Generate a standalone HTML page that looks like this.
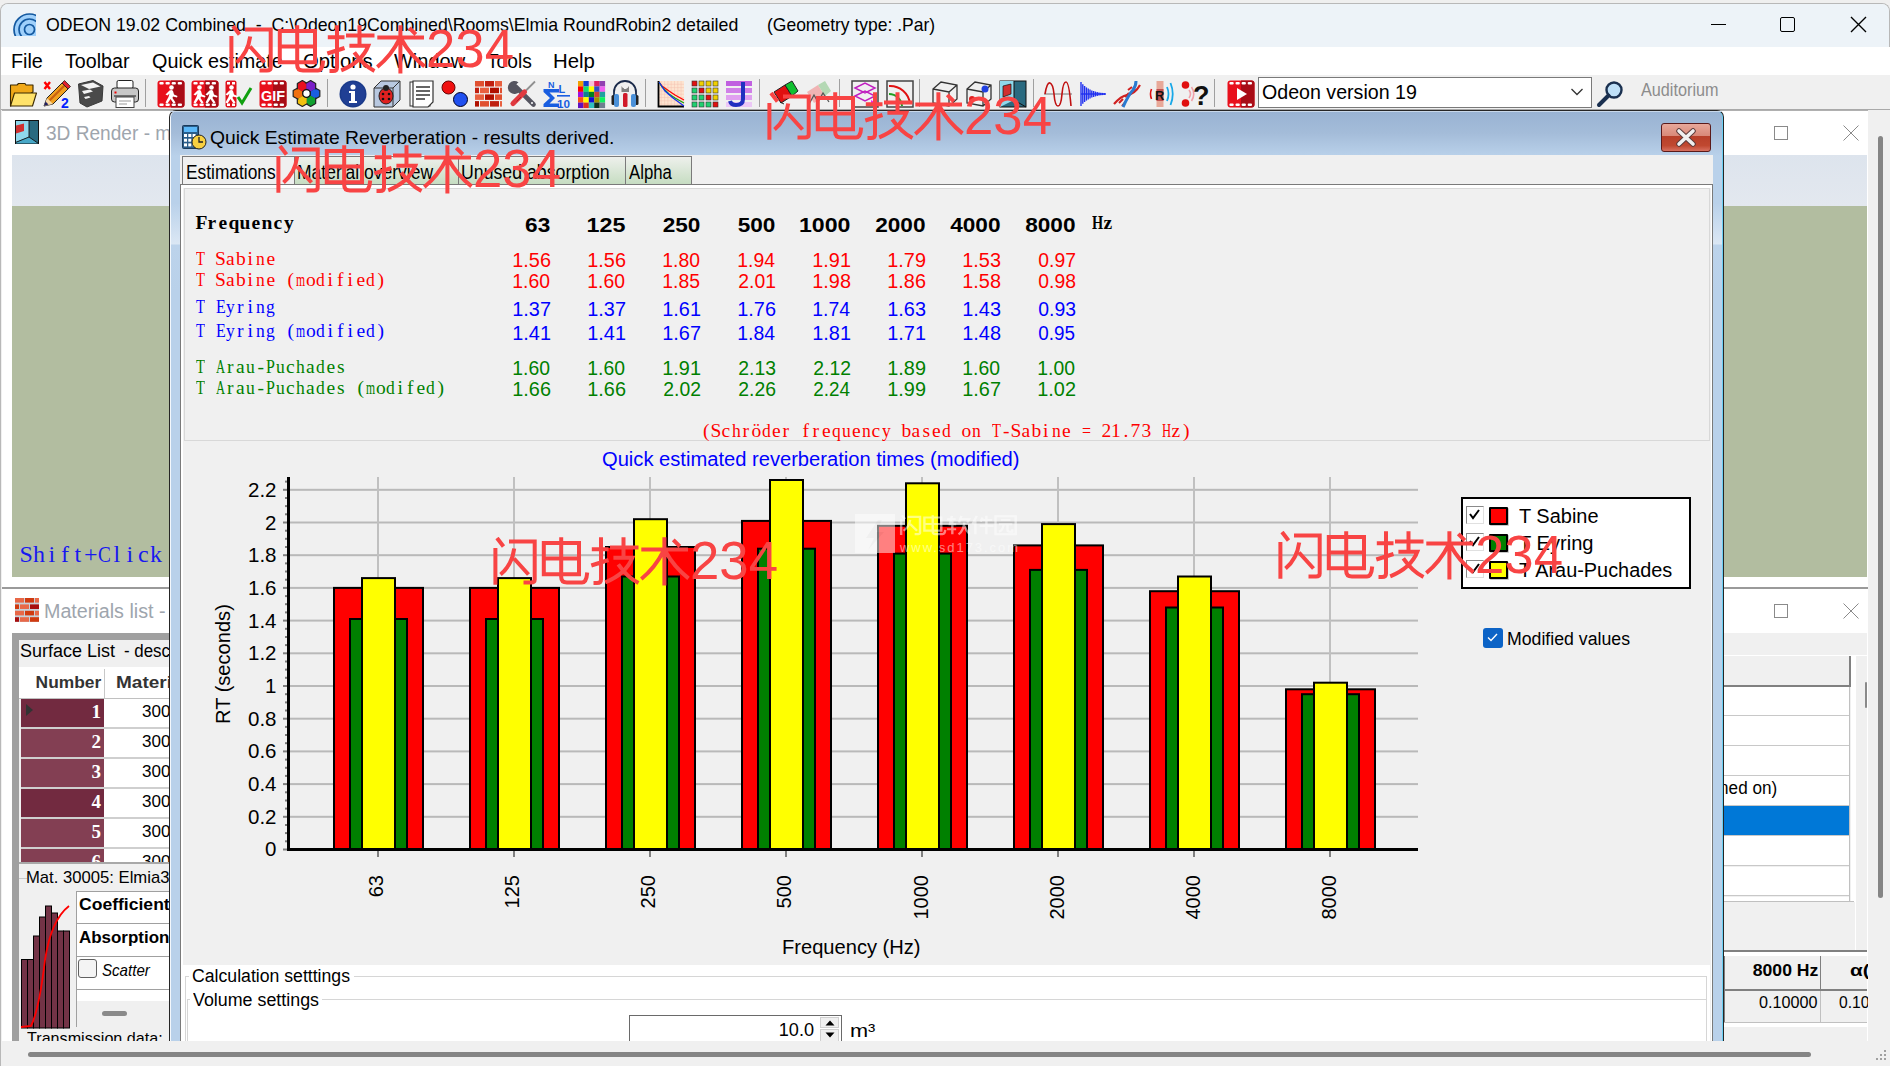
<!DOCTYPE html><html><head><meta charset="utf-8"><style>
*{margin:0;padding:0;box-sizing:border-box}
html,body{width:1890px;height:1066px;overflow:hidden;background:#f0f0f0;position:relative}
body>div,body>span,body>svg{position:absolute}
.t{position:absolute;white-space:pre;line-height:1;display:block}
</style></head><body><div style="left:0px;top:0px;width:1890px;height:3px;background:#efefef;"></div>
<div style="left:0px;top:3px;width:1890px;height:1063px;background:#f0f0f0;border-top:1px solid #b8b8b8;border-left:1px solid #b8b8b8;border-right:1px solid #b8b8b8;border-top-left-radius:8px;border-top-right-radius:8px;"></div>
<div style="left:1px;top:4px;width:1888px;height:43px;background:#edf3f8;border-top-left-radius:7px;border-top-right-radius:7px;"></div>
<svg style="left:12px;top:12px" width="26" height="26" viewBox="0 0 26 26"><clipPath id="ic"><rect x="0" y="0" width="24" height="24"/></clipPath><g clip-path="url(#ic)" fill="#9fd0fb" stroke="#1459a0" stroke-width="1.7"><circle cx="17.5" cy="17.5" r="15.5"/><circle cx="17.5" cy="17.5" r="10.5"/><circle cx="17.5" cy="17.5" r="5"/></g></svg>
<span id="t1" class="t" style="top:16.00px;font-family:'Liberation Sans', sans-serif;font-size:18.5px;color:#000;font-weight:400;left:46.00px;transform-origin:left top;transform:scaleX(0.9576);">ODEON 19.02 Combined  -  C:\Odeon19Combined\Rooms\Elmia RoundRobin2 detailed</span>
<span id="t2" class="t" style="top:16.00px;font-family:'Liberation Sans', sans-serif;font-size:18.5px;color:#000;font-weight:400;left:767.05px;transform-origin:left top;transform:scaleX(0.9451);">(Geometry type: .Par)</span>
<div style="left:1711px;top:24px;width:15px;height:1px;background:#000;"></div>
<div style="left:1780px;top:17px;width:15px;height:15px;background:transparent;border:1.4px solid #000;border-radius:2px;"></div>
<svg style="left:1850px;top:16px" width="17" height="17" viewBox="0 0 17 17"><path d="M1 1L16 16M16 1L1 16" stroke="#000" stroke-width="1.4"/></svg>
<div style="left:1px;top:47px;width:1889px;height:28px;background:#ffffff;"></div>
<span id="t3" class="t" style="top:52.00px;font-family:'Liberation Sans', sans-serif;font-size:19.5px;color:#000;font-weight:400;left:10.99px;transform-origin:left top;transform:scaleX(1.0143);">File</span>
<span id="t4" class="t" style="top:52.00px;font-family:'Liberation Sans', sans-serif;font-size:19.5px;color:#000;font-weight:400;left:65.00px;transform-origin:left top;transform:scaleX(1.0083);">Toolbar</span>
<span id="t5" class="t" style="top:52.00px;font-family:'Liberation Sans', sans-serif;font-size:19.5px;color:#000;font-weight:400;left:152.00px;transform-origin:left top;transform:scaleX(1.0147);">Quick estimate</span>
<span id="t6" class="t" style="top:52.00px;font-family:'Liberation Sans', sans-serif;font-size:19.5px;color:#000;font-weight:400;left:303.00px;transform-origin:left top;transform:scaleX(1.0378);">Options</span>
<span id="t7" class="t" style="top:52.00px;font-family:'Liberation Sans', sans-serif;font-size:19.5px;color:#000;font-weight:400;left:394.00px;transform-origin:left top;transform:scaleX(1.0246);">Window</span>
<span id="t8" class="t" style="top:52.00px;font-family:'Liberation Sans', sans-serif;font-size:19.5px;color:#000;font-weight:400;left:487.00px;transform-origin:left top;transform:scaleX(0.9831);">Tools</span>
<span id="t9" class="t" style="top:52.00px;font-family:'Liberation Sans', sans-serif;font-size:19.5px;color:#000;font-weight:400;left:552.96px;transform-origin:left top;transform:scaleX(1.0443);">Help</span>
<div style="left:1px;top:75px;width:1889px;height:35px;background:#f0f0f0;"></div>
<div style="left:1px;top:109px;width:1889px;height:1px;background:#a9a9a9;"></div>
<svg style="left:0;top:72px" width="1890" height="40" viewBox="0 0 1890 40"><g transform="translate(9,8)"><path d="M1.5 5 L8 5 L9.5 3.5 L16 3.5 L17 5 L24 5 L24 12 L1.5 26 Z" fill="#f0a818" stroke="#3a2800" stroke-width="1.1" stroke-linejoin="round"/><path d="M1.5 26 L5.5 13 L27.5 13 L23.5 26 Z" fill="#ffe26a" stroke="#3a2800" stroke-width="1.1" stroke-linejoin="round"/></g><g transform="translate(43,8)"><path d="M1.5 2 L7 9 M7 2 L1.5 9" stroke="#ff0000" stroke-width="2.4"/><path d="M1 26 L4 18 L19 3 L25 9 L10 24 Z" fill="#f0a020" stroke="#222" stroke-width="1"/><path d="M6.5 20.5 L21.5 5.5" stroke="#c86010" stroke-width="2.2"/><path d="M19 3 L21.5 0.5 L27.5 6.5 L25 9 Z" fill="#e02030" stroke="#222" stroke-width="0.8"/><path d="M1 26 L4 18 L10 24 Z" fill="#f8d8a0"/><path d="M1 26 L2.5 21.5 L5.5 24.5 Z" fill="#202060"/><text x="18" y="28" font-family="Liberation Sans" font-weight="bold" font-size="14" fill="#0020ff">2</text></g><g transform="translate(78,8)"><path d="M0.5 4 L15 0.5 L25 6 L24 21 L9 27 L2 23 Z" fill="#4a4a4a" stroke="#3a3a3a" stroke-linejoin="round"/><path d="M3 5 L15 2.5 L22.5 6.5 L11 9 Z" fill="#f4f4f4"/><path d="M4 11 L12 9.5 L15 11.5 L6 14 Z" fill="#f4f4f4"/><path d="M6 17 L11 16 L12.5 17.5 L7.5 19 Z" fill="#f4f4f4"/></g><g transform="translate(111,8)"><rect x="6" y="0.5" width="16" height="8" rx="1.5" fill="#fff" stroke="#222"/><rect x="0.5" y="8" width="27" height="14" rx="3" fill="#c8c8c8" stroke="#222"/><rect x="3" y="15" width="22" height="2" fill="#707070"/><rect x="5" y="17" width="18" height="10.5" fill="#fff" stroke="#444"/><rect x="3.5" y="11.5" width="2" height="2" fill="#f00000"/><path d="M8 21 H20 M8 24 H16" stroke="#999"/></g><rect x="145" y="7" width="1" height="28" fill="#a0a0a0"/><rect x="327" y="7" width="1" height="28" fill="#a0a0a0"/><rect x="645" y="7" width="1" height="28" fill="#a0a0a0"/><rect x="759" y="7" width="1" height="28" fill="#a0a0a0"/><rect x="839" y="7" width="1" height="28" fill="#a0a0a0"/><rect x="919" y="7" width="1" height="28" fill="#a0a0a0"/><rect x="1033" y="7" width="1" height="28" fill="#a0a0a0"/><rect x="1214" y="7" width="1" height="28" fill="#a0a0a0"/><g transform="translate(157,8)"><rect x="0.5" y="0.5" width="27" height="27" rx="3" fill="#e8101c"/><path d="M14.0 0.5 H24.5 Q27.5 0.5 27.5 3.5 V24.5 Q27.5 27.5 24.5 27.5 H14.0 Z" fill="#a80c16"/><rect x="2.4" y="2" width="4.3" height="2.6" rx="1" fill="#fff"/><rect x="2.4" y="23.4" width="4.3" height="2.6" rx="1" fill="#fff"/><rect x="8.5" y="2" width="4.3" height="2.6" rx="1" fill="#fff"/><rect x="8.5" y="23.4" width="4.3" height="2.6" rx="1" fill="#fff"/><rect x="14.6" y="2" width="4.3" height="2.6" rx="1" fill="#fff"/><rect x="14.6" y="23.4" width="4.3" height="2.6" rx="1" fill="#fff"/><rect x="20.7" y="2" width="4.3" height="2.6" rx="1" fill="#fff"/><rect x="20.7" y="23.4" width="4.3" height="2.6" rx="1" fill="#fff"/><g transform="translate(14,0)" fill="#fff"><circle cx="0.5" cy="7.5" r="2.3"/><path d="M-1.5 10.5 Q1 9.5 2 11 L3 14.5 L6.5 16 L6 17.5 L2 16.5 L1.5 18 L4.5 22.5 L2.5 23.5 L-0.5 19 L-3.5 23.5 L-5.5 22.5 L-2.5 17 L-1.5 13.5 L-3.5 15.5 L-5.5 14.5 Z"/></g></g><g transform="translate(191,8)"><rect x="0.5" y="0.5" width="27" height="27" rx="3" fill="#e8101c"/><path d="M14.0 0.5 H24.5 Q27.5 0.5 27.5 3.5 V24.5 Q27.5 27.5 24.5 27.5 H14.0 Z" fill="#a80c16"/><rect x="2.4" y="2" width="4.3" height="2.6" rx="1" fill="#fff"/><rect x="2.4" y="23.4" width="4.3" height="2.6" rx="1" fill="#fff"/><rect x="8.5" y="2" width="4.3" height="2.6" rx="1" fill="#fff"/><rect x="8.5" y="23.4" width="4.3" height="2.6" rx="1" fill="#fff"/><rect x="14.6" y="2" width="4.3" height="2.6" rx="1" fill="#fff"/><rect x="14.6" y="23.4" width="4.3" height="2.6" rx="1" fill="#fff"/><rect x="20.7" y="2" width="4.3" height="2.6" rx="1" fill="#fff"/><rect x="20.7" y="23.4" width="4.3" height="2.6" rx="1" fill="#fff"/><g transform="translate(8,0)" fill="#fff"><circle cx="0.5" cy="7.5" r="2.3"/><path d="M-1.5 10.5 Q1 9.5 2 11 L3 14.5 L6.5 16 L6 17.5 L2 16.5 L1.5 18 L4.5 22.5 L2.5 23.5 L-0.5 19 L-3.5 23.5 L-5.5 22.5 L-2.5 17 L-1.5 13.5 L-3.5 15.5 L-5.5 14.5 Z"/></g><g transform="translate(20,0)" fill="#fff"><circle cx="0.5" cy="7.5" r="2.3"/><path d="M-1.5 10.5 Q1 9.5 2 11 L3 14.5 L6.5 16 L6 17.5 L2 16.5 L1.5 18 L4.5 22.5 L2.5 23.5 L-0.5 19 L-3.5 23.5 L-5.5 22.5 L-2.5 17 L-1.5 13.5 L-3.5 15.5 L-5.5 14.5 Z"/></g></g><g transform="translate(225,8)"><rect x="0.5" y="0.5" width="11" height="27" rx="2" fill="#e0101a"/><rect x="2" y="2" width="3" height="2.5" fill="#fff"/><rect x="7" y="2" width="3" height="2.5" fill="#fff"/><rect x="2" y="23.5" width="3" height="2.5" fill="#fff"/><rect x="7" y="23.5" width="3" height="2.5" fill="#fff"/><g transform="translate(6,0)" fill="#fff"><circle cx="0.5" cy="7.5" r="2.3"/><path d="M-1.5 10.5 Q1 9.5 2 11 L3 14.5 L6.5 16 L6 17.5 L2 16.5 L1.5 18 L4.5 22.5 L2.5 23.5 L-0.5 19 L-3.5 23.5 L-5.5 22.5 L-2.5 17 L-1.5 13.5 L-3.5 15.5 L-5.5 14.5 Z"/></g><path d="M13 17 L17 23 L26 8" fill="none" stroke="#10a010" stroke-width="3"/></g><g transform="translate(259,8)"><rect x="0.5" y="0.5" width="27" height="27" rx="3" fill="#e8101c"/><path d="M14.0 0.5 H24.5 Q27.5 0.5 27.5 3.5 V24.5 Q27.5 27.5 24.5 27.5 H14.0 Z" fill="#a80c16"/><rect x="2.4" y="2" width="4.3" height="2.6" rx="1" fill="#fff"/><rect x="2.4" y="23.4" width="4.3" height="2.6" rx="1" fill="#fff"/><rect x="8.5" y="2" width="4.3" height="2.6" rx="1" fill="#fff"/><rect x="8.5" y="23.4" width="4.3" height="2.6" rx="1" fill="#fff"/><rect x="14.6" y="2" width="4.3" height="2.6" rx="1" fill="#fff"/><rect x="14.6" y="23.4" width="4.3" height="2.6" rx="1" fill="#fff"/><rect x="20.7" y="2" width="4.3" height="2.6" rx="1" fill="#fff"/><rect x="20.7" y="23.4" width="4.3" height="2.6" rx="1" fill="#fff"/><text x="14" y="20.5" text-anchor="middle" font-family="Liberation Sans" font-weight="bold" font-size="15" fill="#fff" textLength="24" lengthAdjust="spacingAndGlyphs">GIF</text></g><g transform="translate(306.5,21.5)"><polygon points="13.32,2.90 8.30,5.80 3.28,2.90 3.28,-2.90 8.30,-5.80 13.32,-2.90" fill="#1a5ee0" stroke="#222" stroke-width="1.2" stroke-linejoin="round"/><polygon points="9.17,10.09 4.15,12.99 -0.87,10.09 -0.87,4.29 4.15,1.39 9.17,4.29" fill="#10a030" stroke="#222" stroke-width="1.2" stroke-linejoin="round"/><polygon points="0.87,10.09 -4.15,12.99 -9.17,10.09 -9.17,4.29 -4.15,1.39 0.87,4.29" fill="#f0c010" stroke="#222" stroke-width="1.2" stroke-linejoin="round"/><polygon points="-3.28,2.90 -8.30,5.80 -13.32,2.90 -13.32,-2.90 -8.30,-5.80 -3.28,-2.90" fill="#f07010" stroke="#222" stroke-width="1.2" stroke-linejoin="round"/><polygon points="0.87,-4.29 -4.15,-1.39 -9.17,-4.29 -9.17,-10.09 -4.15,-12.99 0.87,-10.09" fill="#e81020" stroke="#222" stroke-width="1.2" stroke-linejoin="round"/><polygon points="9.17,-4.29 4.15,-1.39 -0.87,-4.29 -0.87,-10.09 4.15,-12.99 9.17,-10.09" fill="#7a20c8" stroke="#222" stroke-width="1.2" stroke-linejoin="round"/><polygon points="12.28,2.30 8.30,4.60 4.32,2.30 4.32,-2.30 8.30,-4.60 12.28,-2.30" fill="#1a5ee0"/><polygon points="8.13,9.49 4.15,11.79 0.17,9.49 0.17,4.89 4.15,2.59 8.13,4.89" fill="#10a030"/><polygon points="-0.17,9.49 -4.15,11.79 -8.13,9.49 -8.13,4.89 -4.15,2.59 -0.17,4.89" fill="#f0c010"/><polygon points="-4.32,2.30 -8.30,4.60 -12.28,2.30 -12.28,-2.30 -8.30,-4.60 -4.32,-2.30" fill="#f07010"/><polygon points="-0.17,-4.89 -4.15,-2.59 -8.13,-4.89 -8.13,-9.49 -4.15,-11.79 -0.17,-9.49" fill="#e81020"/><polygon points="8.13,-4.89 4.15,-2.59 0.17,-4.89 0.17,-9.49 4.15,-11.79 8.13,-9.49" fill="#7a20c8"/><circle cx="0" cy="0" r="3.8" fill="#fff" stroke="#111" stroke-width="1.3"/></g><g transform="translate(339,8)"><circle cx="14" cy="14" r="13.5" fill="#1a3a8a"/><circle cx="14" cy="14" r="12" fill="#203f94"/><circle cx="14" cy="7" r="2.6" fill="#fff"/><path d="M10 11 H16 V21 H18 V23 H10 V21 H12 V13 H10 Z" fill="#fff"/></g><g transform="translate(373,8)"><path d="M1 8 L8 1 L27 1 L27 20 L20 27 L1 27 Z" fill="#b8c8e0" stroke="#333"/><path d="M1 8 H20 V27 M20 8 L27 1" fill="none" stroke="#333"/><ellipse cx="13" cy="16" rx="7" ry="8" fill="#e02020" stroke="#222"/><circle cx="13" cy="8" r="3" fill="#222"/><circle cx="10" cy="14" r="1.3" fill="#111"/><circle cx="16" cy="14" r="1.3" fill="#111"/><circle cx="10" cy="19" r="1.3" fill="#111"/><circle cx="16" cy="19" r="1.3" fill="#111"/></g><g transform="translate(409,8)"><rect x="1" y="2" width="20" height="24" fill="#fff" stroke="#333"/><path d="M4 1 H24 V22 L19 27 H4 Z" fill="#fff" stroke="#333" stroke-width="1.2"/><path d="M7 7 H21 M7 11 H21 M7 15 H21 M7 19 H16" stroke="#333" stroke-width="1.5"/></g><g transform="translate(441,8)"><circle cx="7.5" cy="7.5" r="6.5" fill="#f01010" stroke="#600"/><circle cx="19.5" cy="19.5" r="7" fill="#2050f0" stroke="#002"/></g><g transform="translate(475,8)"><rect x="0" y="1.0" width="9" height="5.5" fill="#e05030"/><rect x="10" y="1.0" width="9" height="5.5" fill="#c02010"/><rect x="20" y="1.0" width="7" height="5.5" fill="#e86040"/><rect x="0" y="7.7" width="4" height="5.5" fill="#c02010"/><rect x="5" y="7.7" width="9" height="5.5" fill="#e86040"/><rect x="15" y="7.7" width="9" height="5.5" fill="#b01000"/><rect x="25" y="7.7" width="2" height="5.5" fill="#e05030"/><rect x="0" y="14.4" width="9" height="5.5" fill="#e86040"/><rect x="10" y="14.4" width="9" height="5.5" fill="#b01000"/><rect x="20" y="14.4" width="7" height="5.5" fill="#e05030"/><rect x="0" y="21.1" width="4" height="5.5" fill="#b01000"/><rect x="5" y="21.1" width="9" height="5.5" fill="#e05030"/><rect x="15" y="21.1" width="9" height="5.5" fill="#c02010"/><rect x="25" y="21.1" width="2" height="5.5" fill="#e86040"/></g><g transform="translate(509,8)"><path d="M7 7 L24.5 24.5" stroke="#555560" stroke-width="4.6" stroke-linecap="round"/><path d="M9.5 2.5 A6.5 6.5 0 1 0 10.5 11.5 L6 8 L8 3.5 Z" fill="#555560"/><circle cx="23" cy="23" r="1" fill="#fff"/><path d="M26 1.5 L14.5 13" stroke="#909090" stroke-width="1.8"/><path d="M15.5 12 L4 23.5" stroke="#e03a40" stroke-width="5.2" stroke-linecap="round"/><path d="M12 17 L7.5 21.5" stroke="#b02028" stroke-width="1"/></g><g transform="translate(543,8)" fill="#1a5ee0" font-family="Liberation Sans" font-weight="bold"><path d="M0.5 9 H16 V12.5 H6.5 L12 18 L6.5 23.5 H16 V27 H0.5 V24 L7 18 L0.5 12 Z"/><text x="5" y="8" font-size="9">N</text><text x="15.5" y="13" font-size="11">L</text><rect x="14" y="15" width="13" height="1.6"/><text x="14" y="27.5" font-size="11" textLength="13" lengthAdjust="spacingAndGlyphs">10</text></g><g transform="translate(577,8)"><rect x="1.0" y="1.0" width="5.5" height="5.5" fill="#f0a000"/><rect x="6.4" y="1.0" width="5.5" height="5.5" fill="#1040d0"/><rect x="11.8" y="1.0" width="5.5" height="5.5" fill="#f8c0d8"/><rect x="17.2" y="1.0" width="5.5" height="5.5" fill="#e02060"/><rect x="22.6" y="1.0" width="5.5" height="5.5" fill="#9040b0"/><rect x="1.0" y="6.4" width="5.5" height="5.5" fill="#ff0000"/><rect x="6.4" y="6.4" width="5.5" height="5.5" fill="#10e070"/><rect x="11.8" y="6.4" width="5.5" height="5.5" fill="#ffff00"/><rect x="17.2" y="6.4" width="5.5" height="5.5" fill="#3050c0"/><rect x="22.6" y="6.4" width="5.5" height="5.5" fill="#f060f0"/><rect x="1.0" y="11.8" width="5.5" height="5.5" fill="#a010e0"/><rect x="6.4" y="11.8" width="5.5" height="5.5" fill="#108090"/><rect x="11.8" y="11.8" width="5.5" height="5.5" fill="#008020"/><rect x="17.2" y="11.8" width="5.5" height="5.5" fill="#d04030"/><rect x="22.6" y="11.8" width="5.5" height="5.5" fill="#20a0a0"/><rect x="1.0" y="17.2" width="5.5" height="5.5" fill="#ff5010"/><rect x="6.4" y="17.2" width="5.5" height="5.5" fill="#ffff00"/><rect x="11.8" y="17.2" width="5.5" height="5.5" fill="#1010d0"/><rect x="17.2" y="17.2" width="5.5" height="5.5" fill="#a09000"/><rect x="22.6" y="17.2" width="5.5" height="5.5" fill="#10f060"/><rect x="1.0" y="22.6" width="5.5" height="5.5" fill="#6010c0"/><rect x="6.4" y="22.6" width="5.5" height="5.5" fill="#e03020"/><rect x="11.8" y="22.6" width="5.5" height="5.5" fill="#30c0c0"/><rect x="17.2" y="22.6" width="5.5" height="5.5" fill="#103020"/><rect x="22.6" y="22.6" width="5.5" height="5.5" fill="#708090"/></g><g transform="translate(611,8)"><path d="M3 16 V12 A11 11 0 0 1 25 12 V16" fill="none" stroke="#1a2a4a" stroke-width="1.8"/><rect x="0.5" y="15" width="3.5" height="10" rx="1.5" fill="#222"/><rect x="24" y="15" width="3.5" height="10" rx="1.5" fill="#222"/><rect x="3" y="14" width="5" height="13" rx="2" fill="#4a90d8"/><rect x="20" y="14" width="5" height="13" rx="2" fill="#4a90d8"/><rect x="12" y="13" width="4.5" height="14" rx="1.5" fill="#d01828"/><path d="M10.5 6 A4 4 0 0 0 18 6 V12 H10.5 Z" fill="#808080"/><rect x="13" y="4" width="2.5" height="5" fill="#f0f0f0"/></g><g transform="translate(657,8)"><rect x="1" y="1" width="26" height="26" fill="#fde4d0"/><path d="M4.3 1 V27 M1 4.3 H27" stroke="#f4c0b0" stroke-width="0.5"/><path d="M7.6 1 V27 M1 7.6 H27" stroke="#f4c0b0" stroke-width="0.5"/><path d="M10.9 1 V27 M1 10.9 H27" stroke="#f4c0b0" stroke-width="0.5"/><path d="M14.2 1 V27 M1 14.2 H27" stroke="#f4c0b0" stroke-width="0.5"/><path d="M17.5 1 V27 M1 17.5 H27" stroke="#f4c0b0" stroke-width="0.5"/><path d="M20.8 1 V27 M1 20.8 H27" stroke="#f4c0b0" stroke-width="0.5"/><path d="M24.1 1 V27 M1 24.1 H27" stroke="#f4c0b0" stroke-width="0.5"/><path d="M1.5 1 V26.5 H27" fill="none" stroke="#000" stroke-width="1.8"/><path d="M2 2 L5 6 L12 11 L18 15 L27 20" fill="none" stroke="#ff0000" stroke-width="1.2"/><path d="M2 2 L5 7 L12 14 L18 18 L27 23" fill="none" stroke="#10a010" stroke-width="1.2"/><path d="M2 2 L8 11 L16 18 L27 26" fill="none" stroke="#1030f0" stroke-width="1.2"/></g><g transform="translate(691,8)"><rect x="1" y="1" width="5" height="5" fill="#e01010" stroke="#333" stroke-width="0.6"/><rect x="8" y="1" width="5" height="5" fill="#f0d000" stroke="#333" stroke-width="0.6"/><rect x="15" y="1" width="5" height="5" fill="#f0d000" stroke="#333" stroke-width="0.6"/><rect x="22" y="1" width="5" height="5" fill="#f0d000" stroke="#333" stroke-width="0.6"/><rect x="1" y="8" width="5" height="5" fill="#20d070" stroke="#333" stroke-width="0.6"/><rect x="8" y="8" width="5" height="5" fill="#e01010" stroke="#333" stroke-width="0.6"/><rect x="15" y="8" width="5" height="5" fill="#f0d000" stroke="#333" stroke-width="0.6"/><rect x="22" y="8" width="5" height="5" fill="#f0d000" stroke="#333" stroke-width="0.6"/><rect x="1" y="15" width="5" height="5" fill="#20d070" stroke="#333" stroke-width="0.6"/><rect x="8" y="15" width="5" height="5" fill="#20d070" stroke="#333" stroke-width="0.6"/><rect x="15" y="15" width="5" height="5" fill="#e01010" stroke="#333" stroke-width="0.6"/><rect x="22" y="15" width="5" height="5" fill="#f0d000" stroke="#333" stroke-width="0.6"/><rect x="1" y="22" width="5" height="5" fill="#20d070" stroke="#333" stroke-width="0.6"/><rect x="8" y="22" width="5" height="5" fill="#20d070" stroke="#333" stroke-width="0.6"/><rect x="15" y="22" width="5" height="5" fill="#20d070" stroke="#333" stroke-width="0.6"/><rect x="22" y="22" width="5" height="5" fill="#e01010" stroke="#333" stroke-width="0.6"/></g><g transform="translate(725,8)"><rect x="1" y="1" width="26" height="5" fill="#c060e0"/><rect x="1" y="8" width="26" height="5" fill="#d080e8"/><rect x="1" y="15" width="26" height="5" fill="#e0a0f0"/><rect x="1" y="22" width="26" height="5" fill="#ecc8f6"/><path d="M18 2 V19 Q18 25 11 25 Q6 25 5 21" fill="none" stroke="#2030c0" stroke-width="4"/></g><g transform="translate(772,8)"><path d="M2 12 L13 5 L20 16 L9 23 Z" fill="#e01010" stroke="#222"/><path d="M13 5 L20 1 L26 11 L20 16 Z" fill="#10c030" stroke="#222"/><path d="M8 22 L12 24" stroke="#222"/></g><g transform="translate(805,8)" opacity="0.75"><path d="M2 12 L13 5 L20 16 L9 23 Z" fill="#f0a0a0"/><path d="M13 5 L20 1 L26 11 L20 16 Z" fill="#a0d0a0"/><path d="M3 26 L9 15 L13 22 L18 13 L24 22" fill="none" stroke="#222" stroke-width="1.3"/></g><g transform="translate(851,8)"><rect x="1" y="1" width="26" height="26" fill="#f0f0f0" stroke="#444" stroke-width="1.5"/><path d="M4 8 L14 3 L24 8 L14 13 Z M4 16 L14 11 L24 16 L14 21 Z" fill="none" stroke="#c020c0" stroke-width="1.5"/><path d="M20 20 L25 23 L20 25" fill="#f020f0"/></g><g transform="translate(886,8)"><rect x="1" y="1" width="26" height="26" fill="#f0f0f0" stroke="#444" stroke-width="1.5"/><path d="M3 6 A20 20 0 0 1 24 24" fill="none" stroke="#e01010" stroke-width="2"/><path d="M3 14 A13 13 0 0 1 16 26" fill="none" stroke="#20a020" stroke-width="2"/></g><g transform="translate(931,8)" fill="none" stroke="#333" stroke-width="1.3"><path d="M2 9 L10 2 L26 5 L26 19 L18 26 L2 23 Z M2 9 L18 12 L26 5 M18 12 V26"/></g><g transform="translate(965,8)" fill="none" stroke="#333" stroke-width="1.3"><path d="M2 9 L10 2 L26 5 L26 19 L18 26 L2 23 Z M2 9 L18 12 L26 5 M18 12 V26"/><circle cx="20" cy="9" r="3.5" fill="#2040e0" stroke="none"/><circle cx="7" cy="19" r="3" fill="#e02020" stroke="none"/></g><g transform="translate(999,8)"><rect x="1" y="1" width="26" height="26" fill="#2a6a80" stroke="#111"/><path d="M1 1 H15 V20 L1 27 Z" fill="#8fd8ec"/><path d="M4 6 L12 4 L12 14 L4 17 Z" fill="#d03030" stroke="#111" stroke-width="0.7"/><path d="M15 1 V20 L27 27" fill="none" stroke="#111"/></g><g transform="translate(1044,8)"><path d="M0 14 H28" stroke="#555" stroke-width="0.8"/><path d="M1 14 Q3 2 6 3 Q9 4 10 14 Q11 26 14 26 Q17 26 18 14 Q19 2 22 2 Q25 2 27 26" fill="none" stroke="#c01010" stroke-width="1.6"/></g><g transform="translate(1079,8)" stroke="#2030f0" stroke-width="1.4"><path d="M2.0 2.0 V26.0"/><path d="M3.8 4.2 V23.8"/><path d="M5.6 6.0 V22.0"/><path d="M7.4 7.4 V20.6"/><path d="M9.2 8.6 V19.4"/><path d="M11.0 9.6 V18.4"/><path d="M12.8 10.4 V17.6"/><path d="M14.6 11.0 V17.0"/><path d="M16.4 11.6 V16.4"/><path d="M18.2 12.0 V16.0"/><path d="M20.0 12.4 V15.6"/><path d="M21.8 12.7 V15.3"/><path d="M23.6 12.9 V15.1"/><path d="M25.4 13.1 V14.9"/><path d="M2 14 H27"/></g><g transform="translate(1113,8)"><path d="M6 23 L10 19 M9 26 L13 21 M12 17 L16 13 M15 10 L19 7 M19 13 L22 9" stroke="#d02020" stroke-width="2"/><path d="M1 24 Q8 16 14 15 Q22 14 27 5" fill="none" stroke="#d02020" stroke-width="2.2"/><path d="M10 27 Q16 14 20 10 Q23 6 23 1" fill="none" stroke="#2a7ad0" stroke-width="3"/></g><g transform="translate(1146,8)"><rect x="10.5" y="1" width="7" height="26" fill="#e8a898"/><rect x="10.5" y="9" width="7" height="12" fill="#c05050"/><text x="9" y="20" font-family="Liberation Sans" font-weight="bold" font-size="13" fill="#111">R</text><path d="M5.5 9 Q3.5 14 5.5 19" fill="none" stroke="#e01010" stroke-width="1.6"/><path d="M21 7 Q24 14 21 21 M24.5 3 Q29 14 24.5 25" fill="none" stroke="#18a8e8" stroke-width="1.8"/></g><g transform="translate(1181,8)"><circle cx="4.5" cy="5" r="3.8" fill="#e01010"/><circle cx="4.5" cy="23" r="3.8" fill="#e01010"/><path d="M8 10 Q11 14 8 18 M10.5 7 Q15 14 10.5 21" fill="none" stroke="#f0a0a8" stroke-width="1.6"/><text x="12" y="25" font-family="Liberation Sans" font-weight="bold" font-size="27" fill="#111">?</text></g><g transform="translate(1227,8)"><rect x="0.5" y="0.5" width="27" height="27" rx="3" fill="#e8101c"/><path d="M14.0 0.5 H24.5 Q27.5 0.5 27.5 3.5 V24.5 Q27.5 27.5 24.5 27.5 H14.0 Z" fill="#a80c16"/><rect x="2.4" y="2" width="4.3" height="2.6" rx="1" fill="#fff"/><rect x="2.4" y="23.4" width="4.3" height="2.6" rx="1" fill="#fff"/><rect x="8.5" y="2" width="4.3" height="2.6" rx="1" fill="#fff"/><rect x="8.5" y="23.4" width="4.3" height="2.6" rx="1" fill="#fff"/><rect x="14.6" y="2" width="4.3" height="2.6" rx="1" fill="#fff"/><rect x="14.6" y="23.4" width="4.3" height="2.6" rx="1" fill="#fff"/><rect x="20.7" y="2" width="4.3" height="2.6" rx="1" fill="#fff"/><rect x="20.7" y="23.4" width="4.3" height="2.6" rx="1" fill="#fff"/><path d="M10 8 L20 14 L10 20 Z" fill="#fff"/></g><g transform="translate(1596,8)"><circle cx="18" cy="10" r="7.5" fill="#bfe0f8" stroke="#1a3050" stroke-width="2.4"/><path d="M12.5 15.5 L3 25" stroke="#1a3050" stroke-width="4" stroke-linecap="round"/></g></svg>
<div style="left:1258px;top:77px;width:334px;height:31px;background:#fff;border:1px solid #7a7a7a;"></div>
<span id="t10" class="t" style="top:83.00px;font-family:'Liberation Sans', sans-serif;font-size:19.5px;color:#000;font-weight:400;left:1262.00px;transform-origin:left top;transform:scaleX(1.0060);">Odeon version 19</span>
<svg style="left:1570px;top:87px" width="14" height="10" viewBox="0 0 14 10"><path d="M1.5 2 L7 7.5 L12.5 2" fill="none" stroke="#333" stroke-width="1.3"/></svg>
<span id="t11" class="t" style="top:82.00px;font-family:'Liberation Sans', sans-serif;font-size:17.5px;color:#8c8c8c;font-weight:400;left:1640.50px;transform-origin:left top;transform:scaleX(0.9269);">Auditorium</span>
<div style="left:1px;top:110px;width:1889px;height:956px;background:#f0f0f0;"></div>
<div style="left:2px;top:110px;width:1866px;height:478px;background:#ffffff;border-top:1px solid #b0b0b0;"></div>
<svg style="left:15px;top:120px" width="25" height="25" viewBox="0 0 25 25"><rect x="0.5" y="0.5" width="23" height="23" fill="#2a6a80" stroke="#111"/><path d="M1 1 H14 V17 L1 22 Z" fill="#8fd8ec"/><path d="M1 22 L14 17 L23.5 23.5 H1 Z" fill="#48a8c8"/><path d="M1 5.5 L9 3.5 L9 11 L1 13.5 Z" fill="#d03030"/><path d="M14 0.5 V17 L23.5 23.5 M0.5 22.5 L14 17" fill="none" stroke="#111" stroke-width="0.9"/></svg>
<span id="t12" class="t" style="top:124.00px;font-family:'Liberation Sans', sans-serif;font-size:19.5px;color:#9ea5ad;font-weight:400;left:45.50px;transform-origin:left top;transform:scaleX(0.9792);">3D Render - m</span>
<div style="left:1774px;top:126px;width:14px;height:14px;background:transparent;border:1px solid #8a8a8a;"></div>
<svg style="left:1843px;top:125px" width="16" height="16" viewBox="0 0 16 16"><path d="M0.5 0.5L15.5 15.5M15.5 0.5L0.5 15.5" stroke="#8a8a8a" stroke-width="1"/></svg>
<div style="left:12px;top:155px;width:1855px;height:51px;background:#e0e6ee;background:linear-gradient(#dde4ed,#e3e8ef);"></div>
<div style="left:12px;top:206px;width:1855px;height:371px;background:#b2bda0;"></div>
<span class="t" style="left:19.50px;top:542px;font-family:'Liberation Serif', serif;font-size:24px;color:#1818f0;font-weight:400;transform-origin:left top;">S</span><span class="t" style="left:33.00px;top:542px;font-family:'Liberation Serif', serif;font-size:24px;color:#1818f0;font-weight:400;transform-origin:left top;">h</span><span class="t" style="left:48.50px;top:542px;font-family:'Liberation Serif', serif;font-size:24px;color:#1818f0;font-weight:400;transform-origin:left top;">i</span><span class="t" style="left:61.00px;top:542px;font-family:'Liberation Serif', serif;font-size:24px;color:#1818f0;font-weight:400;transform-origin:left top;">f</span><span class="t" style="left:74.50px;top:542px;font-family:'Liberation Serif', serif;font-size:24px;color:#1818f0;font-weight:400;transform-origin:left top;">t</span><span class="t" style="left:84.00px;top:542px;font-family:'Liberation Serif', serif;font-size:24px;color:#1818f0;font-weight:400;transform-origin:left top;">+</span><span class="t" style="left:98.00px;top:542px;font-family:'Liberation Serif', serif;font-size:24px;color:#1818f0;font-weight:400;transform-origin:left top;transform:scaleX(0.800);">C</span><span class="t" style="left:113.50px;top:542px;font-family:'Liberation Serif', serif;font-size:24px;color:#1818f0;font-weight:400;transform-origin:left top;">l</span><span class="t" style="left:126.50px;top:542px;font-family:'Liberation Serif', serif;font-size:24px;color:#1818f0;font-weight:400;transform-origin:left top;">i</span><span class="t" style="left:138.00px;top:542px;font-family:'Liberation Serif', serif;font-size:24px;color:#1818f0;font-weight:400;transform-origin:left top;">c</span><span class="t" style="left:150.00px;top:542px;font-family:'Liberation Serif', serif;font-size:24px;color:#1818f0;font-weight:400;transform-origin:left top;">k</span>
<div style="left:2px;top:587px;width:1866px;height:2px;background:#9a9a9a;"></div>
<div style="left:2px;top:589px;width:1866px;height:452px;background:#ffffff;"></div>
<svg style="left:15px;top:598px" width="25" height="25" viewBox="0 0 25 25"><rect x="0" y="0" width="24" height="24" fill="#c8d0d8"/><rect x="0" y="0" width="9" height="4.6" fill="#e86848"/><rect x="10" y="0" width="9" height="4.6" fill="#d03a10"/><rect x="20" y="0" width="4" height="4.6" fill="#e86848"/><rect x="0" y="6.4" width="4" height="4.6" fill="#d03a10"/><rect x="5" y="6.4" width="9" height="4.6" fill="#e86848"/><rect x="15" y="6.4" width="9" height="4.6" fill="#a80e0e"/><rect x="0" y="12.8" width="9" height="4.6" fill="#e86848"/><rect x="10" y="12.8" width="9" height="4.6" fill="#d03a10"/><rect x="20" y="12.8" width="4" height="4.6" fill="#e86848"/><rect x="0" y="19.2" width="4" height="4.6" fill="#a80e0e"/><rect x="5" y="19.2" width="9" height="4.6" fill="#e86848"/><rect x="15" y="19.2" width="9" height="4.6" fill="#d03a10"/></svg>
<span id="t14" class="t" style="top:602.00px;font-family:'Liberation Sans', sans-serif;font-size:19.5px;color:#9ea5ad;font-weight:400;left:44.49px;transform-origin:left top;transform:scaleX(1.0103);">Materials list -</span>
<div style="left:1774px;top:604px;width:14px;height:14px;background:transparent;border:1px solid #8a8a8a;"></div>
<svg style="left:1843px;top:603px" width="16" height="16" viewBox="0 0 16 16"><path d="M0.5 0.5L15.5 15.5M15.5 0.5L0.5 15.5" stroke="#8a8a8a" stroke-width="1"/></svg>
<div style="left:12px;top:633px;width:1711px;height:408px;background:#a0a0a0;"></div>
<div style="left:1723px;top:633px;width:144px;height:408px;background:#f0f0f0;"></div>
<div style="left:19px;top:640px;width:1848px;height:401px;background:#f0f0f0;"></div>
<span id="t15" class="t" style="top:642.00px;font-family:'Liberation Sans', sans-serif;font-size:18px;color:#000;font-weight:400;left:20.00px;transform-origin:left top;transform:scaleX(0.9995);">Surface List</span>
<span id="t16" class="t" style="top:642.00px;font-family:'Liberation Sans', sans-serif;font-size:18px;color:#000;font-weight:400;left:124.00px;transform-origin:left top;transform:scaleX(0.9385);">- desc</span>
<div style="left:19px;top:667px;width:1830px;height:32px;background:#ffffff;"></div>
<div style="left:104px;top:669px;width:1px;height:30px;background:#c8c8c8;"></div>
<span id="t17" class="t" style="top:674.00px;font-family:'Liberation Sans', sans-serif;font-size:17px;color:#333;font-weight:700;right:1788.39px;transform-origin:right top;transform:scaleX(1.0218);">Number</span>
<span id="t18" class="t" style="top:674.00px;font-family:'Liberation Sans', sans-serif;font-size:17px;color:#333;font-weight:700;left:115.88px;transform-origin:left top;transform:scaleX(1.1169);">Materi</span>
<div style="left:19px;top:698px;width:1830px;height:1px;background:#c0c0c0;"></div>
<div style="left:21px;top:699px;width:83px;height:28px;background:#722a40;"></div>
<div style="left:104px;top:699px;width:1745px;height:28px;background:#ffffff;"></div>
<div style="left:21px;top:727px;width:1828px;height:2px;background:#cfcfcf;"></div>
<span id="t19" class="t" style="top:702.00px;font-family:'Liberation Serif', serif;font-size:19px;color:#fff;font-weight:700;right:1789px;transform-origin:right top;">1</span>
<span id="t20" class="t" style="top:703.00px;font-family:'Liberation Sans', sans-serif;font-size:17px;color:#000;font-weight:400;left:141.50px;transform-origin:left top;transform:scaleX(1.0033);">300</span>
<div style="left:21px;top:729px;width:83px;height:28px;background:#833f53;"></div>
<div style="left:104px;top:729px;width:1745px;height:28px;background:#ffffff;"></div>
<div style="left:21px;top:757px;width:1828px;height:2px;background:#cfcfcf;"></div>
<span id="t21" class="t" style="top:732.00px;font-family:'Liberation Serif', serif;font-size:19px;color:#fff;font-weight:700;right:1789px;transform-origin:right top;">2</span>
<span id="t22" class="t" style="top:733.00px;font-family:'Liberation Sans', sans-serif;font-size:17px;color:#000;font-weight:400;left:141.50px;transform-origin:left top;transform:scaleX(1.0033);">300</span>
<div style="left:21px;top:759px;width:83px;height:28px;background:#833f53;"></div>
<div style="left:104px;top:759px;width:1745px;height:28px;background:#ffffff;"></div>
<div style="left:21px;top:787px;width:1828px;height:2px;background:#cfcfcf;"></div>
<span id="t23" class="t" style="top:762.00px;font-family:'Liberation Serif', serif;font-size:19px;color:#fff;font-weight:700;right:1789px;transform-origin:right top;">3</span>
<span id="t24" class="t" style="top:763.00px;font-family:'Liberation Sans', sans-serif;font-size:17px;color:#000;font-weight:400;left:141.50px;transform-origin:left top;transform:scaleX(1.0033);">300</span>
<div style="left:21px;top:789px;width:83px;height:28px;background:#722a40;"></div>
<div style="left:104px;top:789px;width:1745px;height:28px;background:#ffffff;"></div>
<div style="left:21px;top:817px;width:1828px;height:2px;background:#cfcfcf;"></div>
<span id="t25" class="t" style="top:792.00px;font-family:'Liberation Serif', serif;font-size:19px;color:#fff;font-weight:700;right:1789px;transform-origin:right top;">4</span>
<span id="t26" class="t" style="top:793.00px;font-family:'Liberation Sans', sans-serif;font-size:17px;color:#000;font-weight:400;left:141.50px;transform-origin:left top;transform:scaleX(1.0033);">300</span>
<div style="left:21px;top:819px;width:83px;height:28px;background:#833f53;"></div>
<div style="left:104px;top:819px;width:1745px;height:28px;background:#ffffff;"></div>
<div style="left:21px;top:847px;width:1828px;height:2px;background:#cfcfcf;"></div>
<span id="t27" class="t" style="top:822.00px;font-family:'Liberation Serif', serif;font-size:19px;color:#fff;font-weight:700;right:1789px;transform-origin:right top;">5</span>
<span id="t28" class="t" style="top:823.00px;font-family:'Liberation Sans', sans-serif;font-size:17px;color:#000;font-weight:400;left:141.50px;transform-origin:left top;transform:scaleX(1.0033);">300</span>
<div style="left:21px;top:849px;width:83px;height:28px;background:#833f53;"></div>
<div style="left:104px;top:849px;width:1745px;height:28px;background:#ffffff;"></div>
<div style="left:21px;top:877px;width:1828px;height:2px;background:#cfcfcf;"></div>
<span id="t29" class="t" style="top:852.00px;font-family:'Liberation Serif', serif;font-size:19px;color:#fff;font-weight:700;right:1789px;transform-origin:right top;">6</span>
<span id="t30" class="t" style="top:853.00px;font-family:'Liberation Sans', sans-serif;font-size:17px;color:#000;font-weight:400;left:141.50px;transform-origin:left top;transform:scaleX(1.0033);">300</span>
<svg style="left:26px;top:704px" width="8" height="12"><path d="M0 0 L7 6 L0 12 Z" fill="#333"/></svg>
<div style="left:19px;top:862px;width:1830px;height:2px;background:#a8a8a8;"></div>
<div style="left:19px;top:864px;width:1848px;height:177px;background:#f0f0f0;"></div>
<div style="left:19px;top:878px;width:8px;height:1px;background:#c8c8c8;"></div>
<span id="t31" class="t" style="top:869.00px;font-family:'Liberation Sans', sans-serif;font-size:17px;color:#000;font-weight:400;left:26.02px;transform-origin:left top;transform:scaleX(0.9792);">Mat. 30005: Elmia3</span>
<svg style="left:19px;top:900px" width="55" height="130" viewBox="0 0 55 130"><rect x="2.5" y="59.5" width="6" height="68.5" fill="#733346" stroke="#000" stroke-width="1"/><rect x="8.5" y="59.5" width="6" height="68.5" fill="#733346" stroke="#000" stroke-width="1"/><rect x="14.5" y="36.0" width="6" height="92.0" fill="#733346" stroke="#000" stroke-width="1"/><rect x="20.5" y="17.0" width="6" height="111.0" fill="#733346" stroke="#000" stroke-width="1"/><rect x="26.5" y="6.0" width="6" height="122.0" fill="#733346" stroke="#000" stroke-width="1"/><rect x="32.5" y="13.0" width="6" height="115.0" fill="#733346" stroke="#000" stroke-width="1"/><rect x="38.5" y="31.0" width="6" height="97.0" fill="#733346" stroke="#000" stroke-width="1"/><rect x="44.5" y="31.0" width="6" height="97.0" fill="#733346" stroke="#000" stroke-width="1"/><path d="M2 127 L12 126 Q20 110 26 60 Q32 20 50 6" fill="none" stroke="#ff0000" stroke-width="1.8"/></svg>
<div style="left:76px;top:891px;width:94px;height:136px;background:#ffffff;border:1px solid #a0a0a0;border-right:none;"></div>
<div style="left:77px;top:923px;width:93px;height:1px;background:#a0a0a0;"></div>
<div style="left:77px;top:956px;width:93px;height:1px;background:#a0a0a0;"></div>
<div style="left:77px;top:989px;width:93px;height:1px;background:#a0a0a0;"></div>
<div style="left:77px;top:1001px;width:93px;height:26px;background:#f0f0f0;"></div>
<div style="left:102px;top:1011px;width:25px;height:5px;background:#8a8a8a;border-radius:3px;"></div>
<span id="t32" class="t" style="top:896.00px;font-family:'Liberation Sans', sans-serif;font-size:17px;color:#000;font-weight:700;left:79.00px;transform-origin:left top;transform:scaleX(1.0326);">Coefficients</span>
<span id="t33" class="t" style="top:929.00px;font-family:'Liberation Sans', sans-serif;font-size:17px;color:#000;font-weight:700;left:79.00px;transform-origin:left top;transform:scaleX(0.9970);">Absorption</span>
<div style="left:78px;top:959px;width:19px;height:19px;background:#f4f4f4;border:1px solid #606060;border-radius:3px;"></div>
<span id="t34" class="t" style="top:962.00px;font-family:'Liberation Sans', sans-serif;font-size:17px;color:#000;font-weight:400;font-style:italic;left:102.00px;transform-origin:left top;transform:scaleX(0.8878);">Scatter</span>
<span id="t35" class="t" style="top:1030.00px;font-family:'Liberation Sans', sans-serif;font-size:17px;color:#000;font-weight:400;left:27.00px;transform-origin:left top;transform:scaleX(0.9490);">Transmission data:</span>
<div style="left:1723px;top:655px;width:144px;height:1px;background:#ffffff;"></div>
<div style="left:1723px;top:656px;width:126px;height:29px;background:#f0f0f0;"></div>
<div style="left:1723px;top:685px;width:128px;height:2px;background:#808080;"></div>
<div style="left:1849px;top:656px;width:2px;height:31px;background:#808080;"></div>
<div style="left:1723px;top:687px;width:126px;height:28px;background:#ffffff;"></div>
<div style="left:1723px;top:715px;width:126px;height:1px;background:#c8c8c8;"></div>
<div style="left:1723px;top:717px;width:126px;height:28px;background:#ffffff;"></div>
<div style="left:1723px;top:745px;width:126px;height:1px;background:#c8c8c8;"></div>
<div style="left:1723px;top:747px;width:126px;height:28px;background:#ffffff;"></div>
<div style="left:1723px;top:775px;width:126px;height:1px;background:#c8c8c8;"></div>
<div style="left:1723px;top:777px;width:126px;height:28px;background:#ffffff;"></div>
<div style="left:1723px;top:805px;width:126px;height:1px;background:#c8c8c8;"></div>
<div style="left:1723px;top:807px;width:126px;height:28px;background:#ffffff;"></div>
<div style="left:1723px;top:835px;width:126px;height:1px;background:#c8c8c8;"></div>
<div style="left:1723px;top:837px;width:126px;height:28px;background:#ffffff;"></div>
<div style="left:1723px;top:865px;width:126px;height:1px;background:#c8c8c8;"></div>
<div style="left:1723px;top:867px;width:126px;height:28px;background:#ffffff;"></div>
<div style="left:1723px;top:895px;width:126px;height:1px;background:#c8c8c8;"></div>
<div style="left:1723px;top:897px;width:126px;height:28px;background:#ffffff;"></div>
<div style="left:1723px;top:925px;width:126px;height:1px;background:#c8c8c8;"></div>
<div style="left:1723px;top:806px;width:126px;height:29px;background:#0078d7;"></div>
<span id="t36" class="t" style="top:780.00px;font-family:'Liberation Sans', sans-serif;font-size:17.5px;color:#000;font-weight:400;right:112.49px;transform-origin:right top;transform:scaleX(0.9786);">rned on)</span>
<div style="left:1849px;top:687px;width:1px;height:215px;background:#c0c0c0;"></div>
<div style="left:1851px;top:656px;width:4px;height:246px;background:#ffffff;"></div>
<div style="left:1723px;top:901px;width:131px;height:1px;background:#c0c0c0;"></div>
<div style="left:1723px;top:902px;width:132px;height:48px;background:#f0f0f0;"></div>
<div style="left:1855px;top:656px;width:1px;height:294px;background:#ffffff;"></div>
<div style="left:1865px;top:682px;width:2px;height:26px;background:#8a8a8a;border-radius:1px;"></div>
<div style="left:1867px;top:633px;width:1px;height:408px;background:#ffffff;"></div>
<div style="left:1723px;top:950px;width:144px;height:2px;background:#808080;"></div>
<div style="left:1723px;top:952px;width:144px;height:4px;background:#ffffff;"></div>
<div style="left:1723px;top:956px;width:144px;height:33px;background:#f0f0f0;"></div>
<div style="left:1723px;top:989px;width:144px;height:2px;background:#808080;"></div>
<div style="left:1723px;top:991px;width:144px;height:31px;background:#f0f0f0;"></div>
<div style="left:1723px;top:1022px;width:144px;height:1px;background:#c0c0c0;"></div>
<div style="left:1723px;top:1023px;width:144px;height:4px;background:#ffffff;"></div>
<div style="left:1724px;top:956px;width:1px;height:66px;background:#808080;"></div>
<div style="left:1820px;top:956px;width:1px;height:34px;background:#808080;"></div>
<div style="left:1820px;top:991px;width:1px;height:31px;background:#c0c0c0;"></div>
<span id="t37" class="t" style="top:962.00px;font-family:'Liberation Sans', sans-serif;font-size:17px;color:#000;font-weight:700;right:72.08px;transform-origin:right top;transform:scaleX(1.0347);">8000 Hz</span>
<span id="t38" class="t" style="top:962.00px;font-family:'Liberation Sans', sans-serif;font-size:17px;color:#000;font-weight:700;left:1850.00px;transform-origin:left top;transform:scaleX(1.2158);">α(</span>
<span id="t39" class="t" style="top:994.00px;font-family:'Liberation Sans', sans-serif;font-size:17px;color:#000;font-weight:400;right:72.17px;transform-origin:right top;transform:scaleX(0.9509);">0.10000</span>
<span id="t40" class="t" style="top:994.00px;font-family:'Liberation Sans', sans-serif;font-size:17px;color:#000;font-weight:400;left:1839.00px;transform-origin:left top;transform:scaleX(0.9193);">0.10</span>
<div style="left:1868px;top:110px;width:22px;height:931px;background:#f0f0f0;"></div>
<div style="left:1878px;top:136px;width:5px;height:762px;background:#858585;border-radius:3px;"></div>
<div style="left:1px;top:1041px;width:1889px;height:25px;background:#f0f0f0;"></div>
<div style="left:28px;top:1052px;width:1783px;height:5px;background:#858585;border-radius:3px;"></div>
<svg style="left:1868px;top:1046px" width="20" height="18"><rect x="16" y="4" width="2" height="2" fill="#a0a0a0"/><rect x="12" y="8" width="2" height="2" fill="#a0a0a0"/><rect x="16" y="8" width="2" height="2" fill="#a0a0a0"/><rect x="8" y="12" width="2" height="2" fill="#a0a0a0"/><rect x="12" y="12" width="2" height="2" fill="#a0a0a0"/><rect x="16" y="12" width="2" height="2" fill="#a0a0a0"/></svg>
<div style="left:169px;top:110px;width:1555px;height:931px;background:#b9d1ea;border:1px solid #262626;border-bottom:none;border-top-left-radius:7px;border-top-right-radius:7px;background:linear-gradient(to bottom,#99b3d3 0px,#a4bcd9 22px,#b9d1ea 45px,#b9d1ea 92px,#dbe7f4 133px,#bcd3eb 134px,#b9d1ea 180px);box-shadow:inset -1px 0 0 #6ad0f4, inset 1px 0 0 #f4f8fc;"></div>
<div style="left:170px;top:111px;width:1552px;height:1px;background:#c8d8ea;border-top-left-radius:6px;border-top-right-radius:6px;"></div>
<svg style="left:182px;top:125px" width="25" height="25" viewBox="0 0 25 25"><rect x="0.5" y="0.5" width="16" height="23" rx="1" fill="#2a5d8a" stroke="#1a3a5a"/><rect x="2" y="2" width="13" height="5" fill="#5cb8f8"/><rect x="2.0" y="9.0" width="3" height="3" fill="#fff"/><rect x="6.3" y="9.0" width="3" height="3" fill="#fff"/><rect x="10.6" y="9.0" width="3" height="3" fill="#fff"/><rect x="2.0" y="13.7" width="3" height="3" fill="#fff"/><rect x="6.3" y="13.7" width="3" height="3" fill="#fff"/><rect x="10.6" y="13.7" width="3" height="3" fill="#fff"/><rect x="2.0" y="18.4" width="3" height="3" fill="#fff"/><rect x="6.3" y="18.4" width="3" height="3" fill="#fff"/><rect x="10.6" y="18.4" width="3" height="3" fill="#fff"/><circle cx="17" cy="17" r="7" fill="#f8d040" stroke="#222" stroke-width="1"/><path d="M17 12 V17 H21" fill="none" stroke="#222" stroke-width="1.3"/></svg>
<span id="t41" class="t" style="top:128.00px;font-family:'Liberation Sans', sans-serif;font-size:19px;color:#000;font-weight:400;left:210.00px;transform-origin:left top;transform:scaleX(1.0156);">Quick Estimate Reverberation - results derived.</span>
<div style="left:1661px;top:123px;width:50px;height:29px;background:#c84838;border:1px solid #5a1a1a;border-radius:3px;background:linear-gradient(to bottom,#e8a89a 0%,#d88878 45%,#b8402a 46%,#c04830 80%,#d87060 100%);"></div>
<svg style="left:1675px;top:128px" width="22" height="19" viewBox="0 0 22 19"><path d="M4 3 L18 16 M18 3 L4 16" stroke="#5a3a3a" stroke-width="5.5" stroke-linecap="round"/><path d="M4 3 L18 16 M18 3 L4 16" stroke="#f0f0f0" stroke-width="3.6" stroke-linecap="round"/></svg>
<div style="left:180px;top:155px;width:1533px;height:886px;background:#f0f0f0;"></div>
<div style="left:294px;top:156px;width:165px;height:29px;background:#dfe8dc;border:1px solid #7a7a7a;background:linear-gradient(#eef0ec,#c6ddc2);"></div>
<span id="t42" class="t" style="top:163.00px;font-family:'Liberation Sans', sans-serif;font-size:19.5px;color:#000;font-weight:400;left:297.10px;transform-origin:left top;transform:scaleX(0.8969);">Material overview</span>
<div style="left:458px;top:156px;width:168px;height:29px;background:#dfe8dc;border:1px solid #7a7a7a;background:linear-gradient(#eef0ec,#c6ddc2);"></div>
<span id="t43" class="t" style="top:163.00px;font-family:'Liberation Sans', sans-serif;font-size:19.5px;color:#000;font-weight:400;left:461.09px;transform-origin:left top;transform:scaleX(0.9083);">Unused absorption</span>
<div style="left:625px;top:156px;width:67px;height:29px;background:#dfe8dc;border:1px solid #7a7a7a;background:linear-gradient(#eef0ec,#c6ddc2);"></div>
<span id="t44" class="t" style="top:163.00px;font-family:'Liberation Sans', sans-serif;font-size:19.5px;color:#000;font-weight:400;left:629.00px;transform-origin:left top;transform:scaleX(0.8595);">Alpha</span>
<div style="left:181px;top:184px;width:1532px;height:1px;background:#7a7a7a;"></div>
<div style="left:182px;top:156px;width:113px;height:29px;background:#f0f0f0;border:1px solid #7a7a7a;border-bottom:none;"></div>
<span id="t45" class="t" style="top:163.00px;font-family:'Liberation Sans', sans-serif;font-size:19.5px;color:#000;font-weight:400;left:186.11px;transform-origin:left top;transform:scaleX(0.8897);">Estimations</span>
<div style="left:180px;top:184px;width:1533px;height:857px;background:#ffffff;border-left:1px solid #7a7a7a;border-right:1px solid #7a7a7a;border-top:1px solid #7a7a7a;"></div>
<div style="left:183px;top:188px;width:1528px;height:853px;background:#f0f0f0;"></div>
<div style="left:184px;top:188px;width:1526px;height:253px;background:#f0f0f0;border:1px solid #d8d8d8;"></div>
<span class="t" style="left:195.50px;top:213px;font-family:'Liberation Serif', serif;font-size:19.5px;color:#000;font-weight:700;transform-origin:left top;">F</span><span class="t" style="left:207.50px;top:213px;font-family:'Liberation Serif', serif;font-size:19.5px;color:#000;font-weight:700;transform-origin:left top;">r</span><span class="t" style="left:218.50px;top:213px;font-family:'Liberation Serif', serif;font-size:19.5px;color:#000;font-weight:700;transform-origin:left top;">e</span><span class="t" style="left:228.50px;top:213px;font-family:'Liberation Serif', serif;font-size:19.5px;color:#000;font-weight:700;transform-origin:left top;">q</span><span class="t" style="left:239.50px;top:213px;font-family:'Liberation Serif', serif;font-size:19.5px;color:#000;font-weight:700;transform-origin:left top;">u</span><span class="t" style="left:251.50px;top:213px;font-family:'Liberation Serif', serif;font-size:19.5px;color:#000;font-weight:700;transform-origin:left top;">e</span><span class="t" style="left:261.50px;top:213px;font-family:'Liberation Serif', serif;font-size:19.5px;color:#000;font-weight:700;transform-origin:left top;">n</span><span class="t" style="left:273.50px;top:213px;font-family:'Liberation Serif', serif;font-size:19.5px;color:#000;font-weight:700;transform-origin:left top;">c</span><span class="t" style="left:284.00px;top:213px;font-family:'Liberation Serif', serif;font-size:19.5px;color:#000;font-weight:700;transform-origin:left top;">y</span>
<span id="t47" class="t" style="top:215.00px;font-family:'Liberation Sans', sans-serif;font-size:20px;color:#000;font-weight:700;right:1339.56px;transform-origin:right top;transform:scaleX(1.1300);">63</span>
<span id="t48" class="t" style="top:215.00px;font-family:'Liberation Sans', sans-serif;font-size:20px;color:#000;font-weight:700;right:1264.56px;transform-origin:right top;transform:scaleX(1.1660);">125</span>
<span id="t49" class="t" style="top:215.00px;font-family:'Liberation Sans', sans-serif;font-size:20px;color:#000;font-weight:700;right:1189.56px;transform-origin:right top;transform:scaleX(1.1310);">250</span>
<span id="t50" class="t" style="top:215.00px;font-family:'Liberation Sans', sans-serif;font-size:20px;color:#000;font-weight:700;right:1114.56px;transform-origin:right top;transform:scaleX(1.1310);">500</span>
<span id="t51" class="t" style="top:215.00px;font-family:'Liberation Sans', sans-serif;font-size:20px;color:#000;font-weight:700;right:1039.56px;transform-origin:right top;transform:scaleX(1.1575);">1000</span>
<span id="t52" class="t" style="top:215.00px;font-family:'Liberation Sans', sans-serif;font-size:20px;color:#000;font-weight:700;right:964.56px;transform-origin:right top;transform:scaleX(1.1314);">2000</span>
<span id="t53" class="t" style="top:215.00px;font-family:'Liberation Sans', sans-serif;font-size:20px;color:#000;font-weight:700;right:889.56px;transform-origin:right top;transform:scaleX(1.1314);">4000</span>
<span id="t54" class="t" style="top:215.00px;font-family:'Liberation Sans', sans-serif;font-size:20px;color:#000;font-weight:700;right:814.56px;transform-origin:right top;transform:scaleX(1.1314);">8000</span>
<span class="t" style="left:1091.50px;top:213px;font-family:'Liberation Serif', serif;font-size:19.5px;color:#000;font-weight:700;transform-origin:left top;transform:scaleX(0.733);">H</span><span class="t" style="left:1103.50px;top:213px;font-family:'Liberation Serif', serif;font-size:19.5px;color:#000;font-weight:700;transform-origin:left top;">z</span>
<span class="t" style="left:196.00px;top:249px;font-family:'Liberation Serif', serif;font-size:19.5px;color:#ff0000;font-weight:400;transform-origin:left top;transform:scaleX(0.750);">T</span><span class="t" style="left:215.00px;top:249px;font-family:'Liberation Serif', serif;font-size:19.5px;color:#ff0000;font-weight:400;transform-origin:left top;">S</span><span class="t" style="left:226.00px;top:249px;font-family:'Liberation Serif', serif;font-size:19.5px;color:#ff0000;font-weight:400;transform-origin:left top;">a</span><span class="t" style="left:236.00px;top:249px;font-family:'Liberation Serif', serif;font-size:19.5px;color:#ff0000;font-weight:400;transform-origin:left top;">b</span><span class="t" style="left:247.50px;top:249px;font-family:'Liberation Serif', serif;font-size:19.5px;color:#ff0000;font-weight:400;transform-origin:left top;">i</span><span class="t" style="left:256.00px;top:249px;font-family:'Liberation Serif', serif;font-size:19.5px;color:#ff0000;font-weight:400;transform-origin:left top;transform:scaleX(0.900);">n</span><span class="t" style="left:266.50px;top:249px;font-family:'Liberation Serif', serif;font-size:19.5px;color:#ff0000;font-weight:400;transform-origin:left top;">e</span>
<span id="t57" class="t" style="top:251.00px;font-family:'Liberation Sans', sans-serif;font-size:19.5px;color:#ff0000;font-weight:400;right:1338.84px;transform-origin:right top;transform:scaleX(1.0192);">1.56</span>
<span id="t58" class="t" style="top:251.00px;font-family:'Liberation Sans', sans-serif;font-size:19.5px;color:#ff0000;font-weight:400;right:1263.84px;transform-origin:right top;transform:scaleX(1.0192);">1.56</span>
<span id="t59" class="t" style="top:251.00px;font-family:'Liberation Sans', sans-serif;font-size:19.5px;color:#ff0000;font-weight:400;right:1189.85px;transform-origin:right top;transform:scaleX(0.9917);">1.80</span>
<span id="t60" class="t" style="top:251.00px;font-family:'Liberation Sans', sans-serif;font-size:19.5px;color:#ff0000;font-weight:400;right:1114.85px;transform-origin:right top;transform:scaleX(0.9917);">1.94</span>
<span id="t61" class="t" style="top:251.00px;font-family:'Liberation Sans', sans-serif;font-size:19.5px;color:#ff0000;font-weight:400;right:1038.84px;transform-origin:right top;transform:scaleX(1.0192);">1.91</span>
<span id="t62" class="t" style="top:251.00px;font-family:'Liberation Sans', sans-serif;font-size:19.5px;color:#ff0000;font-weight:400;right:963.84px;transform-origin:right top;transform:scaleX(1.0192);">1.79</span>
<span id="t63" class="t" style="top:251.00px;font-family:'Liberation Sans', sans-serif;font-size:19.5px;color:#ff0000;font-weight:400;right:888.84px;transform-origin:right top;transform:scaleX(1.0192);">1.53</span>
<span id="t64" class="t" style="top:251.00px;font-family:'Liberation Sans', sans-serif;font-size:19.5px;color:#ff0000;font-weight:400;right:813.86px;transform-origin:right top;transform:scaleX(0.9917);">0.97</span>
<span class="t" style="left:196.00px;top:270px;font-family:'Liberation Serif', serif;font-size:19.5px;color:#ff0000;font-weight:400;transform-origin:left top;transform:scaleX(0.750);">T</span><span class="t" style="left:215.00px;top:270px;font-family:'Liberation Serif', serif;font-size:19.5px;color:#ff0000;font-weight:400;transform-origin:left top;">S</span><span class="t" style="left:226.00px;top:270px;font-family:'Liberation Serif', serif;font-size:19.5px;color:#ff0000;font-weight:400;transform-origin:left top;">a</span><span class="t" style="left:236.00px;top:270px;font-family:'Liberation Serif', serif;font-size:19.5px;color:#ff0000;font-weight:400;transform-origin:left top;">b</span><span class="t" style="left:247.50px;top:270px;font-family:'Liberation Serif', serif;font-size:19.5px;color:#ff0000;font-weight:400;transform-origin:left top;">i</span><span class="t" style="left:256.00px;top:270px;font-family:'Liberation Serif', serif;font-size:19.5px;color:#ff0000;font-weight:400;transform-origin:left top;transform:scaleX(0.900);">n</span><span class="t" style="left:266.50px;top:270px;font-family:'Liberation Serif', serif;font-size:19.5px;color:#ff0000;font-weight:400;transform-origin:left top;">e</span><span class="t" style="left:287.50px;top:270px;font-family:'Liberation Serif', serif;font-size:19.5px;color:#ff0000;font-weight:400;transform-origin:left top;">(</span><span class="t" style="left:296.00px;top:270px;font-family:'Liberation Serif', serif;font-size:19.5px;color:#ff0000;font-weight:400;transform-origin:left top;transform:scaleX(0.600);">m</span><span class="t" style="left:306.00px;top:270px;font-family:'Liberation Serif', serif;font-size:19.5px;color:#ff0000;font-weight:400;transform-origin:left top;">o</span><span class="t" style="left:316.00px;top:270px;font-family:'Liberation Serif', serif;font-size:19.5px;color:#ff0000;font-weight:400;transform-origin:left top;transform:scaleX(0.900);">d</span><span class="t" style="left:327.50px;top:270px;font-family:'Liberation Serif', serif;font-size:19.5px;color:#ff0000;font-weight:400;transform-origin:left top;">i</span><span class="t" style="left:337.00px;top:270px;font-family:'Liberation Serif', serif;font-size:19.5px;color:#ff0000;font-weight:400;transform-origin:left top;">f</span><span class="t" style="left:347.50px;top:270px;font-family:'Liberation Serif', serif;font-size:19.5px;color:#ff0000;font-weight:400;transform-origin:left top;">i</span><span class="t" style="left:356.50px;top:270px;font-family:'Liberation Serif', serif;font-size:19.5px;color:#ff0000;font-weight:400;transform-origin:left top;">e</span><span class="t" style="left:366.00px;top:270px;font-family:'Liberation Serif', serif;font-size:19.5px;color:#ff0000;font-weight:400;transform-origin:left top;transform:scaleX(0.900);">d</span><span class="t" style="left:377.50px;top:270px;font-family:'Liberation Serif', serif;font-size:19.5px;color:#ff0000;font-weight:400;transform-origin:left top;">)</span>
<span id="t66" class="t" style="top:272.00px;font-family:'Liberation Sans', sans-serif;font-size:19.5px;color:#ff0000;font-weight:400;right:1339.85px;transform-origin:right top;transform:scaleX(0.9917);">1.60</span>
<span id="t67" class="t" style="top:272.00px;font-family:'Liberation Sans', sans-serif;font-size:19.5px;color:#ff0000;font-weight:400;right:1264.85px;transform-origin:right top;transform:scaleX(0.9917);">1.60</span>
<span id="t68" class="t" style="top:272.00px;font-family:'Liberation Sans', sans-serif;font-size:19.5px;color:#ff0000;font-weight:400;right:1189.85px;transform-origin:right top;transform:scaleX(0.9917);">1.85</span>
<span id="t69" class="t" style="top:272.00px;font-family:'Liberation Sans', sans-serif;font-size:19.5px;color:#ff0000;font-weight:400;right:1113.86px;transform-origin:right top;transform:scaleX(0.9917);">2.01</span>
<span id="t70" class="t" style="top:272.00px;font-family:'Liberation Sans', sans-serif;font-size:19.5px;color:#ff0000;font-weight:400;right:1038.84px;transform-origin:right top;transform:scaleX(1.0192);">1.98</span>
<span id="t71" class="t" style="top:272.00px;font-family:'Liberation Sans', sans-serif;font-size:19.5px;color:#ff0000;font-weight:400;right:963.84px;transform-origin:right top;transform:scaleX(1.0192);">1.86</span>
<span id="t72" class="t" style="top:272.00px;font-family:'Liberation Sans', sans-serif;font-size:19.5px;color:#ff0000;font-weight:400;right:888.84px;transform-origin:right top;transform:scaleX(1.0192);">1.58</span>
<span id="t73" class="t" style="top:272.00px;font-family:'Liberation Sans', sans-serif;font-size:19.5px;color:#ff0000;font-weight:400;right:813.86px;transform-origin:right top;transform:scaleX(0.9917);">0.98</span>
<span class="t" style="left:196.00px;top:297px;font-family:'Liberation Serif', serif;font-size:19.5px;color:#0000ff;font-weight:400;transform-origin:left top;transform:scaleX(0.750);">T</span><span class="t" style="left:216.00px;top:297px;font-family:'Liberation Serif', serif;font-size:19.5px;color:#0000ff;font-weight:400;transform-origin:left top;transform:scaleX(0.818);">E</span><span class="t" style="left:226.00px;top:297px;font-family:'Liberation Serif', serif;font-size:19.5px;color:#0000ff;font-weight:400;transform-origin:left top;transform:scaleX(0.900);">y</span><span class="t" style="left:237.00px;top:297px;font-family:'Liberation Serif', serif;font-size:19.5px;color:#0000ff;font-weight:400;transform-origin:left top;">r</span><span class="t" style="left:247.50px;top:297px;font-family:'Liberation Serif', serif;font-size:19.5px;color:#0000ff;font-weight:400;transform-origin:left top;">i</span><span class="t" style="left:256.00px;top:297px;font-family:'Liberation Serif', serif;font-size:19.5px;color:#0000ff;font-weight:400;transform-origin:left top;transform:scaleX(0.900);">n</span><span class="t" style="left:266.00px;top:297px;font-family:'Liberation Serif', serif;font-size:19.5px;color:#0000ff;font-weight:400;transform-origin:left top;transform:scaleX(0.900);">g</span>
<span id="t75" class="t" style="top:300.00px;font-family:'Liberation Sans', sans-serif;font-size:19.5px;color:#0000ff;font-weight:400;right:1338.84px;transform-origin:right top;transform:scaleX(1.0192);">1.37</span>
<span id="t76" class="t" style="top:300.00px;font-family:'Liberation Sans', sans-serif;font-size:19.5px;color:#0000ff;font-weight:400;right:1263.84px;transform-origin:right top;transform:scaleX(1.0192);">1.37</span>
<span id="t77" class="t" style="top:300.00px;font-family:'Liberation Sans', sans-serif;font-size:19.5px;color:#0000ff;font-weight:400;right:1188.84px;transform-origin:right top;transform:scaleX(1.0192);">1.61</span>
<span id="t78" class="t" style="top:300.00px;font-family:'Liberation Sans', sans-serif;font-size:19.5px;color:#0000ff;font-weight:400;right:1113.84px;transform-origin:right top;transform:scaleX(1.0192);">1.76</span>
<span id="t79" class="t" style="top:300.00px;font-family:'Liberation Sans', sans-serif;font-size:19.5px;color:#0000ff;font-weight:400;right:1039.85px;transform-origin:right top;transform:scaleX(0.9917);">1.74</span>
<span id="t80" class="t" style="top:300.00px;font-family:'Liberation Sans', sans-serif;font-size:19.5px;color:#0000ff;font-weight:400;right:963.84px;transform-origin:right top;transform:scaleX(1.0192);">1.63</span>
<span id="t81" class="t" style="top:300.00px;font-family:'Liberation Sans', sans-serif;font-size:19.5px;color:#0000ff;font-weight:400;right:888.84px;transform-origin:right top;transform:scaleX(1.0192);">1.43</span>
<span id="t82" class="t" style="top:300.00px;font-family:'Liberation Sans', sans-serif;font-size:19.5px;color:#0000ff;font-weight:400;right:813.86px;transform-origin:right top;transform:scaleX(0.9917);">0.93</span>
<span class="t" style="left:196.00px;top:321px;font-family:'Liberation Serif', serif;font-size:19.5px;color:#0000ff;font-weight:400;transform-origin:left top;transform:scaleX(0.750);">T</span><span class="t" style="left:216.00px;top:321px;font-family:'Liberation Serif', serif;font-size:19.5px;color:#0000ff;font-weight:400;transform-origin:left top;transform:scaleX(0.818);">E</span><span class="t" style="left:226.00px;top:321px;font-family:'Liberation Serif', serif;font-size:19.5px;color:#0000ff;font-weight:400;transform-origin:left top;transform:scaleX(0.900);">y</span><span class="t" style="left:237.00px;top:321px;font-family:'Liberation Serif', serif;font-size:19.5px;color:#0000ff;font-weight:400;transform-origin:left top;">r</span><span class="t" style="left:247.50px;top:321px;font-family:'Liberation Serif', serif;font-size:19.5px;color:#0000ff;font-weight:400;transform-origin:left top;">i</span><span class="t" style="left:256.00px;top:321px;font-family:'Liberation Serif', serif;font-size:19.5px;color:#0000ff;font-weight:400;transform-origin:left top;transform:scaleX(0.900);">n</span><span class="t" style="left:266.00px;top:321px;font-family:'Liberation Serif', serif;font-size:19.5px;color:#0000ff;font-weight:400;transform-origin:left top;transform:scaleX(0.900);">g</span><span class="t" style="left:287.50px;top:321px;font-family:'Liberation Serif', serif;font-size:19.5px;color:#0000ff;font-weight:400;transform-origin:left top;">(</span><span class="t" style="left:296.00px;top:321px;font-family:'Liberation Serif', serif;font-size:19.5px;color:#0000ff;font-weight:400;transform-origin:left top;transform:scaleX(0.600);">m</span><span class="t" style="left:306.00px;top:321px;font-family:'Liberation Serif', serif;font-size:19.5px;color:#0000ff;font-weight:400;transform-origin:left top;">o</span><span class="t" style="left:316.00px;top:321px;font-family:'Liberation Serif', serif;font-size:19.5px;color:#0000ff;font-weight:400;transform-origin:left top;transform:scaleX(0.900);">d</span><span class="t" style="left:327.50px;top:321px;font-family:'Liberation Serif', serif;font-size:19.5px;color:#0000ff;font-weight:400;transform-origin:left top;">i</span><span class="t" style="left:337.00px;top:321px;font-family:'Liberation Serif', serif;font-size:19.5px;color:#0000ff;font-weight:400;transform-origin:left top;">f</span><span class="t" style="left:347.50px;top:321px;font-family:'Liberation Serif', serif;font-size:19.5px;color:#0000ff;font-weight:400;transform-origin:left top;">i</span><span class="t" style="left:356.50px;top:321px;font-family:'Liberation Serif', serif;font-size:19.5px;color:#0000ff;font-weight:400;transform-origin:left top;">e</span><span class="t" style="left:366.00px;top:321px;font-family:'Liberation Serif', serif;font-size:19.5px;color:#0000ff;font-weight:400;transform-origin:left top;transform:scaleX(0.900);">d</span><span class="t" style="left:377.50px;top:321px;font-family:'Liberation Serif', serif;font-size:19.5px;color:#0000ff;font-weight:400;transform-origin:left top;">)</span>
<span id="t84" class="t" style="top:324.00px;font-family:'Liberation Sans', sans-serif;font-size:19.5px;color:#0000ff;font-weight:400;right:1338.84px;transform-origin:right top;transform:scaleX(1.0192);">1.41</span>
<span id="t85" class="t" style="top:324.00px;font-family:'Liberation Sans', sans-serif;font-size:19.5px;color:#0000ff;font-weight:400;right:1263.84px;transform-origin:right top;transform:scaleX(1.0192);">1.41</span>
<span id="t86" class="t" style="top:324.00px;font-family:'Liberation Sans', sans-serif;font-size:19.5px;color:#0000ff;font-weight:400;right:1188.84px;transform-origin:right top;transform:scaleX(1.0192);">1.67</span>
<span id="t87" class="t" style="top:324.00px;font-family:'Liberation Sans', sans-serif;font-size:19.5px;color:#0000ff;font-weight:400;right:1114.85px;transform-origin:right top;transform:scaleX(0.9917);">1.84</span>
<span id="t88" class="t" style="top:324.00px;font-family:'Liberation Sans', sans-serif;font-size:19.5px;color:#0000ff;font-weight:400;right:1038.84px;transform-origin:right top;transform:scaleX(1.0192);">1.81</span>
<span id="t89" class="t" style="top:324.00px;font-family:'Liberation Sans', sans-serif;font-size:19.5px;color:#0000ff;font-weight:400;right:963.84px;transform-origin:right top;transform:scaleX(1.0192);">1.71</span>
<span id="t90" class="t" style="top:324.00px;font-family:'Liberation Sans', sans-serif;font-size:19.5px;color:#0000ff;font-weight:400;right:888.84px;transform-origin:right top;transform:scaleX(1.0192);">1.48</span>
<span id="t91" class="t" style="top:324.00px;font-family:'Liberation Sans', sans-serif;font-size:19.5px;color:#0000ff;font-weight:400;right:814.85px;transform-origin:right top;transform:scaleX(0.9657);">0.95</span>
<span class="t" style="left:196.00px;top:357px;font-family:'Liberation Serif', serif;font-size:19.5px;color:#008000;font-weight:400;transform-origin:left top;transform:scaleX(0.750);">T</span><span class="t" style="left:216.00px;top:357px;font-family:'Liberation Serif', serif;font-size:19.5px;color:#008000;font-weight:400;transform-origin:left top;transform:scaleX(0.643);">A</span><span class="t" style="left:227.00px;top:357px;font-family:'Liberation Serif', serif;font-size:19.5px;color:#008000;font-weight:400;transform-origin:left top;">r</span><span class="t" style="left:236.00px;top:357px;font-family:'Liberation Serif', serif;font-size:19.5px;color:#008000;font-weight:400;transform-origin:left top;">a</span><span class="t" style="left:246.00px;top:357px;font-family:'Liberation Serif', serif;font-size:19.5px;color:#008000;font-weight:400;transform-origin:left top;transform:scaleX(0.900);">u</span><span class="t" style="left:257.50px;top:357px;font-family:'Liberation Serif', serif;font-size:19.5px;color:#008000;font-weight:400;transform-origin:left top;">-</span><span class="t" style="left:266.00px;top:357px;font-family:'Liberation Serif', serif;font-size:19.5px;color:#008000;font-weight:400;transform-origin:left top;transform:scaleX(0.818);">P</span><span class="t" style="left:276.00px;top:357px;font-family:'Liberation Serif', serif;font-size:19.5px;color:#008000;font-weight:400;transform-origin:left top;transform:scaleX(0.900);">u</span><span class="t" style="left:286.00px;top:357px;font-family:'Liberation Serif', serif;font-size:19.5px;color:#008000;font-weight:400;transform-origin:left top;">c</span><span class="t" style="left:296.00px;top:357px;font-family:'Liberation Serif', serif;font-size:19.5px;color:#008000;font-weight:400;transform-origin:left top;transform:scaleX(0.900);">h</span><span class="t" style="left:306.00px;top:357px;font-family:'Liberation Serif', serif;font-size:19.5px;color:#008000;font-weight:400;transform-origin:left top;">a</span><span class="t" style="left:316.00px;top:357px;font-family:'Liberation Serif', serif;font-size:19.5px;color:#008000;font-weight:400;transform-origin:left top;transform:scaleX(0.900);">d</span><span class="t" style="left:326.50px;top:357px;font-family:'Liberation Serif', serif;font-size:19.5px;color:#008000;font-weight:400;transform-origin:left top;">e</span><span class="t" style="left:337.00px;top:357px;font-family:'Liberation Serif', serif;font-size:19.5px;color:#008000;font-weight:400;transform-origin:left top;">s</span>
<span id="t93" class="t" style="top:359.00px;font-family:'Liberation Sans', sans-serif;font-size:19.5px;color:#008000;font-weight:400;right:1339.85px;transform-origin:right top;transform:scaleX(0.9917);">1.60</span>
<span id="t94" class="t" style="top:359.00px;font-family:'Liberation Sans', sans-serif;font-size:19.5px;color:#008000;font-weight:400;right:1264.85px;transform-origin:right top;transform:scaleX(0.9917);">1.60</span>
<span id="t95" class="t" style="top:359.00px;font-family:'Liberation Sans', sans-serif;font-size:19.5px;color:#008000;font-weight:400;right:1188.84px;transform-origin:right top;transform:scaleX(1.0192);">1.91</span>
<span id="t96" class="t" style="top:359.00px;font-family:'Liberation Sans', sans-serif;font-size:19.5px;color:#008000;font-weight:400;right:1113.86px;transform-origin:right top;transform:scaleX(0.9917);">2.13</span>
<span id="t97" class="t" style="top:359.00px;font-family:'Liberation Sans', sans-serif;font-size:19.5px;color:#008000;font-weight:400;right:1038.86px;transform-origin:right top;transform:scaleX(0.9917);">2.12</span>
<span id="t98" class="t" style="top:359.00px;font-family:'Liberation Sans', sans-serif;font-size:19.5px;color:#008000;font-weight:400;right:963.84px;transform-origin:right top;transform:scaleX(1.0192);">1.89</span>
<span id="t99" class="t" style="top:359.00px;font-family:'Liberation Sans', sans-serif;font-size:19.5px;color:#008000;font-weight:400;right:889.85px;transform-origin:right top;transform:scaleX(0.9917);">1.60</span>
<span id="t100" class="t" style="top:359.00px;font-family:'Liberation Sans', sans-serif;font-size:19.5px;color:#008000;font-weight:400;right:814.85px;transform-origin:right top;transform:scaleX(0.9917);">1.00</span>
<span class="t" style="left:196.00px;top:378px;font-family:'Liberation Serif', serif;font-size:19.5px;color:#008000;font-weight:400;transform-origin:left top;transform:scaleX(0.750);">T</span><span class="t" style="left:216.00px;top:378px;font-family:'Liberation Serif', serif;font-size:19.5px;color:#008000;font-weight:400;transform-origin:left top;transform:scaleX(0.643);">A</span><span class="t" style="left:227.00px;top:378px;font-family:'Liberation Serif', serif;font-size:19.5px;color:#008000;font-weight:400;transform-origin:left top;">r</span><span class="t" style="left:236.00px;top:378px;font-family:'Liberation Serif', serif;font-size:19.5px;color:#008000;font-weight:400;transform-origin:left top;">a</span><span class="t" style="left:246.00px;top:378px;font-family:'Liberation Serif', serif;font-size:19.5px;color:#008000;font-weight:400;transform-origin:left top;transform:scaleX(0.900);">u</span><span class="t" style="left:257.50px;top:378px;font-family:'Liberation Serif', serif;font-size:19.5px;color:#008000;font-weight:400;transform-origin:left top;">-</span><span class="t" style="left:266.00px;top:378px;font-family:'Liberation Serif', serif;font-size:19.5px;color:#008000;font-weight:400;transform-origin:left top;transform:scaleX(0.818);">P</span><span class="t" style="left:276.00px;top:378px;font-family:'Liberation Serif', serif;font-size:19.5px;color:#008000;font-weight:400;transform-origin:left top;transform:scaleX(0.900);">u</span><span class="t" style="left:286.00px;top:378px;font-family:'Liberation Serif', serif;font-size:19.5px;color:#008000;font-weight:400;transform-origin:left top;">c</span><span class="t" style="left:296.00px;top:378px;font-family:'Liberation Serif', serif;font-size:19.5px;color:#008000;font-weight:400;transform-origin:left top;transform:scaleX(0.900);">h</span><span class="t" style="left:306.00px;top:378px;font-family:'Liberation Serif', serif;font-size:19.5px;color:#008000;font-weight:400;transform-origin:left top;">a</span><span class="t" style="left:316.00px;top:378px;font-family:'Liberation Serif', serif;font-size:19.5px;color:#008000;font-weight:400;transform-origin:left top;transform:scaleX(0.900);">d</span><span class="t" style="left:326.50px;top:378px;font-family:'Liberation Serif', serif;font-size:19.5px;color:#008000;font-weight:400;transform-origin:left top;">e</span><span class="t" style="left:337.00px;top:378px;font-family:'Liberation Serif', serif;font-size:19.5px;color:#008000;font-weight:400;transform-origin:left top;">s</span><span class="t" style="left:357.50px;top:378px;font-family:'Liberation Serif', serif;font-size:19.5px;color:#008000;font-weight:400;transform-origin:left top;">(</span><span class="t" style="left:366.00px;top:378px;font-family:'Liberation Serif', serif;font-size:19.5px;color:#008000;font-weight:400;transform-origin:left top;transform:scaleX(0.600);">m</span><span class="t" style="left:376.00px;top:378px;font-family:'Liberation Serif', serif;font-size:19.5px;color:#008000;font-weight:400;transform-origin:left top;">o</span><span class="t" style="left:386.00px;top:378px;font-family:'Liberation Serif', serif;font-size:19.5px;color:#008000;font-weight:400;transform-origin:left top;transform:scaleX(0.900);">d</span><span class="t" style="left:397.50px;top:378px;font-family:'Liberation Serif', serif;font-size:19.5px;color:#008000;font-weight:400;transform-origin:left top;">i</span><span class="t" style="left:407.00px;top:378px;font-family:'Liberation Serif', serif;font-size:19.5px;color:#008000;font-weight:400;transform-origin:left top;">f</span><span class="t" style="left:416.50px;top:378px;font-family:'Liberation Serif', serif;font-size:19.5px;color:#008000;font-weight:400;transform-origin:left top;">e</span><span class="t" style="left:426.00px;top:378px;font-family:'Liberation Serif', serif;font-size:19.5px;color:#008000;font-weight:400;transform-origin:left top;transform:scaleX(0.900);">d</span><span class="t" style="left:437.50px;top:378px;font-family:'Liberation Serif', serif;font-size:19.5px;color:#008000;font-weight:400;transform-origin:left top;">)</span>
<span id="t102" class="t" style="top:380.00px;font-family:'Liberation Sans', sans-serif;font-size:19.5px;color:#008000;font-weight:400;right:1338.84px;transform-origin:right top;transform:scaleX(1.0192);">1.66</span>
<span id="t103" class="t" style="top:380.00px;font-family:'Liberation Sans', sans-serif;font-size:19.5px;color:#008000;font-weight:400;right:1263.84px;transform-origin:right top;transform:scaleX(1.0192);">1.66</span>
<span id="t104" class="t" style="top:380.00px;font-family:'Liberation Sans', sans-serif;font-size:19.5px;color:#008000;font-weight:400;right:1188.86px;transform-origin:right top;transform:scaleX(0.9917);">2.02</span>
<span id="t105" class="t" style="top:380.00px;font-family:'Liberation Sans', sans-serif;font-size:19.5px;color:#008000;font-weight:400;right:1113.86px;transform-origin:right top;transform:scaleX(0.9917);">2.26</span>
<span id="t106" class="t" style="top:380.00px;font-family:'Liberation Sans', sans-serif;font-size:19.5px;color:#008000;font-weight:400;right:1039.85px;transform-origin:right top;transform:scaleX(0.9657);">2.24</span>
<span id="t107" class="t" style="top:380.00px;font-family:'Liberation Sans', sans-serif;font-size:19.5px;color:#008000;font-weight:400;right:963.84px;transform-origin:right top;transform:scaleX(1.0192);">1.99</span>
<span id="t108" class="t" style="top:380.00px;font-family:'Liberation Sans', sans-serif;font-size:19.5px;color:#008000;font-weight:400;right:888.84px;transform-origin:right top;transform:scaleX(1.0192);">1.67</span>
<span id="t109" class="t" style="top:380.00px;font-family:'Liberation Sans', sans-serif;font-size:19.5px;color:#008000;font-weight:400;right:813.84px;transform-origin:right top;transform:scaleX(1.0192);">1.02</span>
<span class="t" style="left:703.00px;top:421px;font-family:'Liberation Serif', serif;font-size:19.5px;color:#ff0000;font-weight:400;transform-origin:left top;">(</span><span class="t" style="left:710.50px;top:421px;font-family:'Liberation Serif', serif;font-size:19.5px;color:#ff0000;font-weight:400;transform-origin:left top;">S</span><span class="t" style="left:721.50px;top:421px;font-family:'Liberation Serif', serif;font-size:19.5px;color:#ff0000;font-weight:400;transform-origin:left top;">c</span><span class="t" style="left:731.50px;top:421px;font-family:'Liberation Serif', serif;font-size:19.5px;color:#ff0000;font-weight:400;transform-origin:left top;transform:scaleX(0.900);">h</span><span class="t" style="left:742.50px;top:421px;font-family:'Liberation Serif', serif;font-size:19.5px;color:#ff0000;font-weight:400;transform-origin:left top;">r</span><span class="t" style="left:751.50px;top:421px;font-family:'Liberation Serif', serif;font-size:19.5px;color:#ff0000;font-weight:400;transform-origin:left top;">ö</span><span class="t" style="left:761.50px;top:421px;font-family:'Liberation Serif', serif;font-size:19.5px;color:#ff0000;font-weight:400;transform-origin:left top;transform:scaleX(0.900);">d</span><span class="t" style="left:772.00px;top:421px;font-family:'Liberation Serif', serif;font-size:19.5px;color:#ff0000;font-weight:400;transform-origin:left top;">e</span><span class="t" style="left:782.50px;top:421px;font-family:'Liberation Serif', serif;font-size:19.5px;color:#ff0000;font-weight:400;transform-origin:left top;">r</span><span class="t" style="left:802.50px;top:421px;font-family:'Liberation Serif', serif;font-size:19.5px;color:#ff0000;font-weight:400;transform-origin:left top;">f</span><span class="t" style="left:812.50px;top:421px;font-family:'Liberation Serif', serif;font-size:19.5px;color:#ff0000;font-weight:400;transform-origin:left top;">r</span><span class="t" style="left:822.00px;top:421px;font-family:'Liberation Serif', serif;font-size:19.5px;color:#ff0000;font-weight:400;transform-origin:left top;">e</span><span class="t" style="left:831.50px;top:421px;font-family:'Liberation Serif', serif;font-size:19.5px;color:#ff0000;font-weight:400;transform-origin:left top;transform:scaleX(0.900);">q</span><span class="t" style="left:841.50px;top:421px;font-family:'Liberation Serif', serif;font-size:19.5px;color:#ff0000;font-weight:400;transform-origin:left top;transform:scaleX(0.900);">u</span><span class="t" style="left:852.00px;top:421px;font-family:'Liberation Serif', serif;font-size:19.5px;color:#ff0000;font-weight:400;transform-origin:left top;">e</span><span class="t" style="left:861.50px;top:421px;font-family:'Liberation Serif', serif;font-size:19.5px;color:#ff0000;font-weight:400;transform-origin:left top;transform:scaleX(0.900);">n</span><span class="t" style="left:871.50px;top:421px;font-family:'Liberation Serif', serif;font-size:19.5px;color:#ff0000;font-weight:400;transform-origin:left top;">c</span><span class="t" style="left:881.50px;top:421px;font-family:'Liberation Serif', serif;font-size:19.5px;color:#ff0000;font-weight:400;transform-origin:left top;transform:scaleX(0.900);">y</span><span class="t" style="left:901.50px;top:421px;font-family:'Liberation Serif', serif;font-size:19.5px;color:#ff0000;font-weight:400;transform-origin:left top;">b</span><span class="t" style="left:911.50px;top:421px;font-family:'Liberation Serif', serif;font-size:19.5px;color:#ff0000;font-weight:400;transform-origin:left top;">a</span><span class="t" style="left:922.50px;top:421px;font-family:'Liberation Serif', serif;font-size:19.5px;color:#ff0000;font-weight:400;transform-origin:left top;">s</span><span class="t" style="left:932.00px;top:421px;font-family:'Liberation Serif', serif;font-size:19.5px;color:#ff0000;font-weight:400;transform-origin:left top;">e</span><span class="t" style="left:941.50px;top:421px;font-family:'Liberation Serif', serif;font-size:19.5px;color:#ff0000;font-weight:400;transform-origin:left top;transform:scaleX(0.900);">d</span><span class="t" style="left:961.50px;top:421px;font-family:'Liberation Serif', serif;font-size:19.5px;color:#ff0000;font-weight:400;transform-origin:left top;">o</span><span class="t" style="left:971.50px;top:421px;font-family:'Liberation Serif', serif;font-size:19.5px;color:#ff0000;font-weight:400;transform-origin:left top;transform:scaleX(0.900);">n</span><span class="t" style="left:991.50px;top:421px;font-family:'Liberation Serif', serif;font-size:19.5px;color:#ff0000;font-weight:400;transform-origin:left top;transform:scaleX(0.750);">T</span><span class="t" style="left:1003.00px;top:421px;font-family:'Liberation Serif', serif;font-size:19.5px;color:#ff0000;font-weight:400;transform-origin:left top;">-</span><span class="t" style="left:1010.50px;top:421px;font-family:'Liberation Serif', serif;font-size:19.5px;color:#ff0000;font-weight:400;transform-origin:left top;">S</span><span class="t" style="left:1021.50px;top:421px;font-family:'Liberation Serif', serif;font-size:19.5px;color:#ff0000;font-weight:400;transform-origin:left top;">a</span><span class="t" style="left:1031.50px;top:421px;font-family:'Liberation Serif', serif;font-size:19.5px;color:#ff0000;font-weight:400;transform-origin:left top;">b</span><span class="t" style="left:1043.00px;top:421px;font-family:'Liberation Serif', serif;font-size:19.5px;color:#ff0000;font-weight:400;transform-origin:left top;">i</span><span class="t" style="left:1051.50px;top:421px;font-family:'Liberation Serif', serif;font-size:19.5px;color:#ff0000;font-weight:400;transform-origin:left top;transform:scaleX(0.900);">n</span><span class="t" style="left:1062.00px;top:421px;font-family:'Liberation Serif', serif;font-size:19.5px;color:#ff0000;font-weight:400;transform-origin:left top;">e</span><span class="t" style="left:1081.50px;top:421px;font-family:'Liberation Serif', serif;font-size:19.5px;color:#ff0000;font-weight:400;transform-origin:left top;transform:scaleX(0.818);">=</span><span class="t" style="left:1101.50px;top:421px;font-family:'Liberation Serif', serif;font-size:19.5px;color:#ff0000;font-weight:400;transform-origin:left top;">2</span><span class="t" style="left:1111.00px;top:421px;font-family:'Liberation Serif', serif;font-size:19.5px;color:#ff0000;font-weight:400;transform-origin:left top;">1</span><span class="t" style="left:1123.50px;top:421px;font-family:'Liberation Serif', serif;font-size:19.5px;color:#ff0000;font-weight:400;transform-origin:left top;">.</span><span class="t" style="left:1130.50px;top:421px;font-family:'Liberation Serif', serif;font-size:19.5px;color:#ff0000;font-weight:400;transform-origin:left top;">7</span><span class="t" style="left:1141.50px;top:421px;font-family:'Liberation Serif', serif;font-size:19.5px;color:#ff0000;font-weight:400;transform-origin:left top;">3</span><span class="t" style="left:1161.50px;top:421px;font-family:'Liberation Serif', serif;font-size:19.5px;color:#ff0000;font-weight:400;transform-origin:left top;transform:scaleX(0.643);">H</span><span class="t" style="left:1171.50px;top:421px;font-family:'Liberation Serif', serif;font-size:19.5px;color:#ff0000;font-weight:400;transform-origin:left top;">z</span><span class="t" style="left:1183.00px;top:421px;font-family:'Liberation Serif', serif;font-size:19.5px;color:#ff0000;font-weight:400;transform-origin:left top;">)</span>
<svg style="left:0;top:0" width="1890" height="1066" viewBox="0 0 1890 1066"><rect x="290" y="815.8" width="1128" height="2" fill="#b9b9b9"/><rect x="290" y="783.1" width="1128" height="2" fill="#b9b9b9"/><rect x="290" y="750.4" width="1128" height="2" fill="#b9b9b9"/><rect x="290" y="717.7" width="1128" height="2" fill="#b9b9b9"/><rect x="290" y="685.0" width="1128" height="2" fill="#b9b9b9"/><rect x="290" y="652.3" width="1128" height="2" fill="#b9b9b9"/><rect x="290" y="619.6" width="1128" height="2" fill="#b9b9b9"/><rect x="290" y="586.9" width="1128" height="2" fill="#b9b9b9"/><rect x="290" y="554.2" width="1128" height="2" fill="#b9b9b9"/><rect x="290" y="521.5" width="1128" height="2" fill="#b9b9b9"/><rect x="290" y="488.8" width="1128" height="2" fill="#b9b9b9"/><rect x="377" y="477" width="2" height="372" fill="#c0c0c0"/><rect x="377" y="851" width="2" height="6" fill="#808080"/><rect x="513" y="477" width="2" height="372" fill="#c0c0c0"/><rect x="513" y="851" width="2" height="6" fill="#808080"/><rect x="649" y="477" width="2" height="372" fill="#c0c0c0"/><rect x="649" y="851" width="2" height="6" fill="#808080"/><rect x="785" y="477" width="2" height="372" fill="#c0c0c0"/><rect x="785" y="851" width="2" height="6" fill="#808080"/><rect x="921" y="477" width="2" height="372" fill="#c0c0c0"/><rect x="921" y="851" width="2" height="6" fill="#808080"/><rect x="1057" y="477" width="2" height="372" fill="#c0c0c0"/><rect x="1057" y="851" width="2" height="6" fill="#808080"/><rect x="1193" y="477" width="2" height="372" fill="#c0c0c0"/><rect x="1193" y="851" width="2" height="6" fill="#808080"/><rect x="1329" y="477" width="2" height="372" fill="#c0c0c0"/><rect x="1329" y="851" width="2" height="6" fill="#808080"/><rect x="283" y="848.5" width="7" height="2" fill="#808080"/><rect x="285" y="840.3" width="4" height="2" fill="#7a7a7a"/><rect x="285" y="832.1" width="4" height="2" fill="#7a7a7a"/><rect x="285" y="824.0" width="4" height="2" fill="#7a7a7a"/><rect x="283" y="815.8" width="7" height="2" fill="#808080"/><rect x="285" y="807.6" width="4" height="2" fill="#7a7a7a"/><rect x="285" y="799.5" width="4" height="2" fill="#7a7a7a"/><rect x="285" y="791.3" width="4" height="2" fill="#7a7a7a"/><rect x="283" y="783.1" width="7" height="2" fill="#808080"/><rect x="285" y="774.9" width="4" height="2" fill="#7a7a7a"/><rect x="285" y="766.8" width="4" height="2" fill="#7a7a7a"/><rect x="285" y="758.6" width="4" height="2" fill="#7a7a7a"/><rect x="283" y="750.4" width="7" height="2" fill="#808080"/><rect x="285" y="742.2" width="4" height="2" fill="#7a7a7a"/><rect x="285" y="734.0" width="4" height="2" fill="#7a7a7a"/><rect x="285" y="725.9" width="4" height="2" fill="#7a7a7a"/><rect x="283" y="717.7" width="7" height="2" fill="#808080"/><rect x="285" y="709.5" width="4" height="2" fill="#7a7a7a"/><rect x="285" y="701.4" width="4" height="2" fill="#7a7a7a"/><rect x="285" y="693.2" width="4" height="2" fill="#7a7a7a"/><rect x="283" y="685.0" width="7" height="2" fill="#808080"/><rect x="285" y="676.8" width="4" height="2" fill="#7a7a7a"/><rect x="285" y="668.6" width="4" height="2" fill="#7a7a7a"/><rect x="285" y="660.5" width="4" height="2" fill="#7a7a7a"/><rect x="283" y="652.3" width="7" height="2" fill="#808080"/><rect x="285" y="644.1" width="4" height="2" fill="#7a7a7a"/><rect x="285" y="636.0" width="4" height="2" fill="#7a7a7a"/><rect x="285" y="627.8" width="4" height="2" fill="#7a7a7a"/><rect x="283" y="619.6" width="7" height="2" fill="#808080"/><rect x="285" y="611.4" width="4" height="2" fill="#7a7a7a"/><rect x="285" y="603.2" width="4" height="2" fill="#7a7a7a"/><rect x="285" y="595.1" width="4" height="2" fill="#7a7a7a"/><rect x="283" y="586.9" width="7" height="2" fill="#808080"/><rect x="285" y="578.7" width="4" height="2" fill="#7a7a7a"/><rect x="285" y="570.5" width="4" height="2" fill="#7a7a7a"/><rect x="285" y="562.4" width="4" height="2" fill="#7a7a7a"/><rect x="283" y="554.2" width="7" height="2" fill="#808080"/><rect x="285" y="546.0" width="4" height="2" fill="#7a7a7a"/><rect x="285" y="537.8" width="4" height="2" fill="#7a7a7a"/><rect x="285" y="529.7" width="4" height="2" fill="#7a7a7a"/><rect x="283" y="521.5" width="7" height="2" fill="#808080"/><rect x="285" y="513.3" width="4" height="2" fill="#7a7a7a"/><rect x="285" y="505.1" width="4" height="2" fill="#7a7a7a"/><rect x="285" y="497.0" width="4" height="2" fill="#7a7a7a"/><rect x="283" y="488.8" width="7" height="2" fill="#808080"/><rect x="285" y="480.6" width="4" height="2" fill="#7a7a7a"/><rect x="334.0" y="587.9" width="89" height="261.6" fill="#ff0000" stroke="#000" stroke-width="2"/><rect x="350.0" y="619.0" width="57" height="230.5" fill="#008000" stroke="#000" stroke-width="2"/><rect x="362.0" y="578.1" width="33" height="271.4" fill="#ffff00" stroke="#000" stroke-width="2"/><rect x="470.0" y="587.9" width="89" height="261.6" fill="#ff0000" stroke="#000" stroke-width="2"/><rect x="486.0" y="619.0" width="57" height="230.5" fill="#008000" stroke="#000" stroke-width="2"/><rect x="498.0" y="578.1" width="33" height="271.4" fill="#ffff00" stroke="#000" stroke-width="2"/><rect x="606.0" y="547.0" width="89" height="302.5" fill="#ff0000" stroke="#000" stroke-width="2"/><rect x="622.0" y="576.5" width="57" height="273.0" fill="#008000" stroke="#000" stroke-width="2"/><rect x="634.0" y="519.2" width="33" height="330.3" fill="#ffff00" stroke="#000" stroke-width="2"/><rect x="742.0" y="520.9" width="89" height="328.6" fill="#ff0000" stroke="#000" stroke-width="2"/><rect x="758.0" y="548.7" width="57" height="300.8" fill="#008000" stroke="#000" stroke-width="2"/><rect x="770.0" y="480.0" width="33" height="369.5" fill="#ffff00" stroke="#000" stroke-width="2"/><rect x="878.0" y="525.8" width="89" height="323.7" fill="#ff0000" stroke="#000" stroke-width="2"/><rect x="894.0" y="553.6" width="57" height="295.9" fill="#008000" stroke="#000" stroke-width="2"/><rect x="906.0" y="483.3" width="33" height="366.2" fill="#ffff00" stroke="#000" stroke-width="2"/><rect x="1014.0" y="545.4" width="89" height="304.1" fill="#ff0000" stroke="#000" stroke-width="2"/><rect x="1030.0" y="569.9" width="57" height="279.6" fill="#008000" stroke="#000" stroke-width="2"/><rect x="1042.0" y="524.1" width="33" height="325.4" fill="#ffff00" stroke="#000" stroke-width="2"/><rect x="1150.0" y="591.2" width="89" height="258.3" fill="#ff0000" stroke="#000" stroke-width="2"/><rect x="1166.0" y="607.5" width="57" height="242.0" fill="#008000" stroke="#000" stroke-width="2"/><rect x="1178.0" y="576.5" width="33" height="273.0" fill="#ffff00" stroke="#000" stroke-width="2"/><rect x="1286.0" y="689.3" width="89" height="160.2" fill="#ff0000" stroke="#000" stroke-width="2"/><rect x="1302.0" y="694.2" width="57" height="155.3" fill="#008000" stroke="#000" stroke-width="2"/><rect x="1314.0" y="682.7" width="33" height="166.8" fill="#ffff00" stroke="#000" stroke-width="2"/><rect x="287" y="477" width="3" height="374" fill="#000"/><rect x="287" y="848" width="1131" height="3" fill="#000"/></svg>
<span id="t111" class="t" style="top:839.00px;font-family:'Liberation Sans', sans-serif;font-size:20.5px;color:#000;font-weight:400;right:1613.5px;transform-origin:right top;">0</span>
<span id="t112" class="t" style="top:807.00px;font-family:'Liberation Sans', sans-serif;font-size:20.5px;color:#000;font-weight:400;right:1613.5px;transform-origin:right top;">0.2</span>
<span id="t113" class="t" style="top:774.00px;font-family:'Liberation Sans', sans-serif;font-size:20.5px;color:#000;font-weight:400;right:1613.5px;transform-origin:right top;">0.4</span>
<span id="t114" class="t" style="top:741.00px;font-family:'Liberation Sans', sans-serif;font-size:20.5px;color:#000;font-weight:400;right:1613.5px;transform-origin:right top;">0.6</span>
<span id="t115" class="t" style="top:709.00px;font-family:'Liberation Sans', sans-serif;font-size:20.5px;color:#000;font-weight:400;right:1613.5px;transform-origin:right top;">0.8</span>
<span id="t116" class="t" style="top:676.00px;font-family:'Liberation Sans', sans-serif;font-size:20.5px;color:#000;font-weight:400;right:1613.5px;transform-origin:right top;">1</span>
<span id="t117" class="t" style="top:643.00px;font-family:'Liberation Sans', sans-serif;font-size:20.5px;color:#000;font-weight:400;right:1613.5px;transform-origin:right top;">1.2</span>
<span id="t118" class="t" style="top:611.00px;font-family:'Liberation Sans', sans-serif;font-size:20.5px;color:#000;font-weight:400;right:1613.5px;transform-origin:right top;">1.4</span>
<span id="t119" class="t" style="top:578.00px;font-family:'Liberation Sans', sans-serif;font-size:20.5px;color:#000;font-weight:400;right:1613.5px;transform-origin:right top;">1.6</span>
<span id="t120" class="t" style="top:545.00px;font-family:'Liberation Sans', sans-serif;font-size:20.5px;color:#000;font-weight:400;right:1613.5px;transform-origin:right top;">1.8</span>
<span id="t121" class="t" style="top:513.00px;font-family:'Liberation Sans', sans-serif;font-size:20.5px;color:#000;font-weight:400;right:1613.5px;transform-origin:right top;">2</span>
<span id="t122" class="t" style="top:480.00px;font-family:'Liberation Sans', sans-serif;font-size:20.5px;color:#000;font-weight:400;right:1613.5px;transform-origin:right top;">2.2</span>
<span id="t123" class="t" style="top:450.00px;font-family:'Liberation Sans', sans-serif;font-size:19.5px;color:#0000ff;font-weight:400;left:602.00px;transform-origin:left top;transform:scaleX(1.0328);">Quick estimated reverberation times (modified)</span>
<span id="t124" class="t" style="top:938.00px;font-family:'Liberation Sans', sans-serif;font-size:19.5px;color:#000;font-weight:400;left:781.97px;transform-origin:left top;transform:scaleX(1.0311);">Frequency (Hz)</span>
<div style="left:214px;top:724px;width:0;height:0"><span class="t" style="left:0;top:0;transform:rotate(-90deg) scaleX(1.03);transform-origin:0 0;font-family:'Liberation Sans', sans-serif;font-size:19.5px;">RT (seconds)</span></div>
<div style="left:366px;top:875px;width:0;height:0"><span class="t" style="right:0;top:0;transform:rotate(-90deg);transform-origin:100% 0;font-family:'Liberation Sans', sans-serif;font-size:20px;">63</span></div>
<div style="left:502px;top:875px;width:0;height:0"><span class="t" style="right:0;top:0;transform:rotate(-90deg);transform-origin:100% 0;font-family:'Liberation Sans', sans-serif;font-size:20px;">125</span></div>
<div style="left:638px;top:875px;width:0;height:0"><span class="t" style="right:0;top:0;transform:rotate(-90deg);transform-origin:100% 0;font-family:'Liberation Sans', sans-serif;font-size:20px;">250</span></div>
<div style="left:774px;top:875px;width:0;height:0"><span class="t" style="right:0;top:0;transform:rotate(-90deg);transform-origin:100% 0;font-family:'Liberation Sans', sans-serif;font-size:20px;">500</span></div>
<div style="left:910px;top:875px;width:0;height:0"><span class="t" style="right:0;top:0;transform:rotate(-90deg);transform-origin:100% 0;font-family:'Liberation Sans', sans-serif;font-size:20px;">1000</span></div>
<div style="left:1046px;top:875px;width:0;height:0"><span class="t" style="right:0;top:0;transform:rotate(-90deg);transform-origin:100% 0;font-family:'Liberation Sans', sans-serif;font-size:20px;">2000</span></div>
<div style="left:1182px;top:875px;width:0;height:0"><span class="t" style="right:0;top:0;transform:rotate(-90deg);transform-origin:100% 0;font-family:'Liberation Sans', sans-serif;font-size:20px;">4000</span></div>
<div style="left:1318px;top:875px;width:0;height:0"><span class="t" style="right:0;top:0;transform:rotate(-90deg);transform-origin:100% 0;font-family:'Liberation Sans', sans-serif;font-size:20px;">8000</span></div>
<div style="left:1461px;top:497px;width:230px;height:92px;background:#ffffff;border:2px solid #000;"></div>
<div style="left:1466px;top:506px;width:18px;height:18px;background:#ffffff;border:1px solid;border-color:#8a8a8a #e0e0e0 #e0e0e0 #8a8a8a;"></div>
<svg style="left:1467px;top:507px" width="15" height="15"><path d="M3 7 L6 11 L12 3" fill="none" stroke="#000" stroke-width="2"/></svg>
<div style="left:1489px;top:507px;width:19px;height:18px;background:#ff0000;border:2px solid #000;border-radius:1px;box-shadow:1px 1px 0 #c8c8c8;"></div>
<span id="t125" class="t" style="top:507.00px;font-family:'Liberation Sans', sans-serif;font-size:19.5px;color:#000;font-weight:400;left:1519.00px;transform-origin:left top;transform:scaleX(1.0233);">T Sabine</span>
<div style="left:1466px;top:533px;width:18px;height:18px;background:#ffffff;border:1px solid;border-color:#8a8a8a #e0e0e0 #e0e0e0 #8a8a8a;"></div>
<svg style="left:1467px;top:534px" width="15" height="15"><path d="M3 7 L6 11 L12 3" fill="none" stroke="#000" stroke-width="2"/></svg>
<div style="left:1489px;top:534px;width:19px;height:18px;background:#008000;border:2px solid #000;border-radius:1px;box-shadow:1px 1px 0 #c8c8c8;"></div>
<span id="t126" class="t" style="top:534.00px;font-family:'Liberation Sans', sans-serif;font-size:19.5px;color:#000;font-weight:400;left:1519.00px;transform-origin:left top;transform:scaleX(1.0313);">T Eyring</span>
<div style="left:1466px;top:560px;width:18px;height:18px;background:#ffffff;border:1px solid;border-color:#8a8a8a #e0e0e0 #e0e0e0 #8a8a8a;"></div>
<svg style="left:1467px;top:561px" width="15" height="15"><path d="M3 7 L6 11 L12 3" fill="none" stroke="#000" stroke-width="2"/></svg>
<div style="left:1489px;top:561px;width:19px;height:18px;background:#ffff00;border:2px solid #000;border-radius:1px;box-shadow:1px 1px 0 #c8c8c8;"></div>
<span id="t127" class="t" style="top:561.00px;font-family:'Liberation Sans', sans-serif;font-size:19.5px;color:#000;font-weight:400;left:1519.00px;transform-origin:left top;transform:scaleX(1.0198);">T Arau-Puchades</span>
<div style="left:1483px;top:628px;width:20px;height:20px;background:#0c63c6;border-radius:3px;"></div>
<svg style="left:1483px;top:628px" width="19" height="19"><path d="M5 9.5 L8 12.5 L14 6" fill="none" stroke="#fff" stroke-width="1.4"/></svg>
<span id="t128" class="t" style="top:630.00px;font-family:'Liberation Sans', sans-serif;font-size:18px;color:#000;font-weight:400;left:1507.02px;transform-origin:left top;transform:scaleX(0.9833);">Modified values</span>
<div style="left:183px;top:965px;width:1527px;height:76px;background:#ffffff;"></div>
<div style="left:185px;top:976px;width:1522px;height:1px;background:#d6d6d6;"></div>
<div style="left:185px;top:976px;width:1px;height:65px;background:#d6d6d6;"></div>
<div style="left:1706px;top:976px;width:1px;height:65px;background:#d6d6d6;"></div>
<div style="left:187px;top:999px;width:1519px;height:1px;background:#d6d6d6;"></div>
<div style="left:187px;top:999px;width:1px;height:42px;background:#d6d6d6;"></div>
<div style="left:189px;top:967px;width:165px;height:20px;background:#ffffff;"></div>
<div style="left:190px;top:990px;width:132px;height:20px;background:#ffffff;"></div>
<span id="t129" class="t" style="top:967.00px;font-family:'Liberation Sans', sans-serif;font-size:18px;color:#000;font-weight:400;left:192.00px;transform-origin:left top;transform:scaleX(0.9808);">Calculation setttings</span>
<span id="t130" class="t" style="top:991.00px;font-family:'Liberation Sans', sans-serif;font-size:18px;color:#000;font-weight:400;left:193.00px;transform-origin:left top;transform:scaleX(0.9916);">Volume settings</span>
<div style="left:629px;top:1015px;width:213px;height:26px;background:#ffffff;border:1px solid #6a6a6a;border-bottom:none;"></div>
<span id="t131" class="t" style="top:1021.00px;font-family:'Liberation Sans', sans-serif;font-size:18.5px;color:#000;font-weight:400;right:1075.72px;transform-origin:right top;transform:scaleX(0.9793);">10.0</span>
<div style="left:820px;top:1017px;width:19px;height:11px;background:#f0f0f0;border:1px solid #d0d0d0;"></div>
<div style="left:820px;top:1029px;width:19px;height:12px;background:#f0f0f0;border:1px solid #d0d0d0;border-bottom:none;"></div>
<svg style="left:822px;top:1017px" width="16" height="24"><path d="M3.5 8.5 L8 3.5 L12.5 8.5 Z M3.5 15.5 L8 20.5 L12.5 15.5 Z" fill="#000"/></svg>
<span id="t132" class="t" style="top:1022.00px;font-family:'Liberation Sans', sans-serif;font-size:18.5px;color:#000;font-weight:400;left:849.82px;transform-origin:left top;transform:scaleX(1.1759);">m³</span>
<svg style="left:229.0px;top:25px" width="290" height="52" viewBox="0 0 290 52"><path d="M4 1 L10.5 9.5 M2.4 11 V47.8 M16 4.4 H41.7 V42.5 Q41.7 45.6 38 45.6 H30.5 M21.2 11.5 Q19 28 7.5 37.5 M21 21.5 L35.5 37.5 M50.8 6 H86 V37.2 H50.8 Z M50.8 21.6 H86 M68.2 0.3 V40 Q68.2 45.5 74 45.5 H89 Q93.5 45.5 94.2 35.5 M98.8 12.2 H115.5 M108 0.3 V42.5 Q108 46 104 46 H100.5 M98.3 28.5 L115.5 23 M117 10.5 H145.5 M130.5 0.3 V19.5 M120.4 20.8 H139.3 Q133 37 112.2 45.4 M125.3 27.3 Q134 40 145.5 46 M148.3 12.6 H195 M171.4 0.3 V48.6 M170.4 14.2 Q162 31 148.3 42 M172.9 15 Q181 30 195.5 41.3 M180.3 2.8 L186.8 9.3" fill="none" stroke="#f84444" stroke-width="4"/><text x="197" y="42" font-family="Liberation Sans" font-size="53" fill="#f84444" textLength="88" lengthAdjust="spacingAndGlyphs">234</text></svg>
<svg style="left:767.2px;top:92.3px" width="290" height="52" viewBox="0 0 290 52"><path d="M4 1 L10.5 9.5 M2.4 11 V47.8 M16 4.4 H41.7 V42.5 Q41.7 45.6 38 45.6 H30.5 M21.2 11.5 Q19 28 7.5 37.5 M21 21.5 L35.5 37.5 M50.8 6 H86 V37.2 H50.8 Z M50.8 21.6 H86 M68.2 0.3 V40 Q68.2 45.5 74 45.5 H89 Q93.5 45.5 94.2 35.5 M98.8 12.2 H115.5 M108 0.3 V42.5 Q108 46 104 46 H100.5 M98.3 28.5 L115.5 23 M117 10.5 H145.5 M130.5 0.3 V19.5 M120.4 20.8 H139.3 Q133 37 112.2 45.4 M125.3 27.3 Q134 40 145.5 46 M148.3 12.6 H195 M171.4 0.3 V48.6 M170.4 14.2 Q162 31 148.3 42 M172.9 15 Q181 30 195.5 41.3 M180.3 2.8 L186.8 9.3" fill="none" stroke="#f84444" stroke-width="4"/><text x="197" y="42" font-family="Liberation Sans" font-size="53" fill="#f84444" textLength="88" lengthAdjust="spacingAndGlyphs">234</text></svg>
<svg style="left:275.7px;top:144.8px" width="290" height="52" viewBox="0 0 290 52"><path d="M4 1 L10.5 9.5 M2.4 11 V47.8 M16 4.4 H41.7 V42.5 Q41.7 45.6 38 45.6 H30.5 M21.2 11.5 Q19 28 7.5 37.5 M21 21.5 L35.5 37.5 M50.8 6 H86 V37.2 H50.8 Z M50.8 21.6 H86 M68.2 0.3 V40 Q68.2 45.5 74 45.5 H89 Q93.5 45.5 94.2 35.5 M98.8 12.2 H115.5 M108 0.3 V42.5 Q108 46 104 46 H100.5 M98.3 28.5 L115.5 23 M117 10.5 H145.5 M130.5 0.3 V19.5 M120.4 20.8 H139.3 Q133 37 112.2 45.4 M125.3 27.3 Q134 40 145.5 46 M148.3 12.6 H195 M171.4 0.3 V48.6 M170.4 14.2 Q162 31 148.3 42 M172.9 15 Q181 30 195.5 41.3 M180.3 2.8 L186.8 9.3" fill="none" stroke="#f84444" stroke-width="4"/><text x="197" y="42" font-family="Liberation Sans" font-size="53" fill="#f84444" textLength="88" lengthAdjust="spacingAndGlyphs">234</text></svg>
<svg style="left:493.2px;top:537px" width="290" height="52" viewBox="0 0 290 52"><path d="M4 1 L10.5 9.5 M2.4 11 V47.8 M16 4.4 H41.7 V42.5 Q41.7 45.6 38 45.6 H30.5 M21.2 11.5 Q19 28 7.5 37.5 M21 21.5 L35.5 37.5 M50.8 6 H86 V37.2 H50.8 Z M50.8 21.6 H86 M68.2 0.3 V40 Q68.2 45.5 74 45.5 H89 Q93.5 45.5 94.2 35.5 M98.8 12.2 H115.5 M108 0.3 V42.5 Q108 46 104 46 H100.5 M98.3 28.5 L115.5 23 M117 10.5 H145.5 M130.5 0.3 V19.5 M120.4 20.8 H139.3 Q133 37 112.2 45.4 M125.3 27.3 Q134 40 145.5 46 M148.3 12.6 H195 M171.4 0.3 V48.6 M170.4 14.2 Q162 31 148.3 42 M172.9 15 Q181 30 195.5 41.3 M180.3 2.8 L186.8 9.3" fill="none" stroke="#f84444" stroke-width="4"/><text x="197" y="42" font-family="Liberation Sans" font-size="53" fill="#f84444" textLength="88" lengthAdjust="spacingAndGlyphs">234</text></svg>
<svg style="left:1278.2px;top:531.4px" width="290" height="52" viewBox="0 0 290 52"><path d="M4 1 L10.5 9.5 M2.4 11 V47.8 M16 4.4 H41.7 V42.5 Q41.7 45.6 38 45.6 H30.5 M21.2 11.5 Q19 28 7.5 37.5 M21 21.5 L35.5 37.5 M50.8 6 H86 V37.2 H50.8 Z M50.8 21.6 H86 M68.2 0.3 V40 Q68.2 45.5 74 45.5 H89 Q93.5 45.5 94.2 35.5 M98.8 12.2 H115.5 M108 0.3 V42.5 Q108 46 104 46 H100.5 M98.3 28.5 L115.5 23 M117 10.5 H145.5 M130.5 0.3 V19.5 M120.4 20.8 H139.3 Q133 37 112.2 45.4 M125.3 27.3 Q134 40 145.5 46 M148.3 12.6 H195 M171.4 0.3 V48.6 M170.4 14.2 Q162 31 148.3 42 M172.9 15 Q181 30 195.5 41.3 M180.3 2.8 L186.8 9.3" fill="none" stroke="#f84444" stroke-width="4"/><text x="197" y="42" font-family="Liberation Sans" font-size="53" fill="#f84444" textLength="88" lengthAdjust="spacingAndGlyphs">234</text></svg>
<svg style="left:854px;top:512px" width="170" height="45" viewBox="0 0 170 45" opacity="0.5"><rect x="1" y="2" width="40" height="39" fill="#ffffff"/><path d="M24 8 L12 26 H20 L14 38 L30 20 H22 L28 8 Z" fill="#e8e8e8" opacity="0.6"/><g transform="translate(46,3) scale(0.48,0.42)"><path d="M4 1 L10.5 9.5 M2.4 11 V47.8 M16 4.4 H41.7 V42.5 Q41.7 45.6 38 45.6 H30.5 M21.2 11.5 Q19 28 7.5 37.5 M21 21.5 L35.5 37.5 M50.8 6 H86 V37.2 H50.8 Z M50.8 21.6 H86 M68.2 0.3 V40 Q68.2 45.5 74 45.5 H89 Q93.5 45.5 94.2 35.5 M98 10 H116 M108 2 L104 22 H117 M109 14 V46 M98 34 H117 M128 2 L123 18 M126 10 H144 L140 18 M134 18 Q132 38 122 46 M134 26 Q138 38 145 46 M160 2 L151 22 M157 14 V46 M172 6 L168 16 M170 12 H192 M166 26 H195 M180 2 V46 M199 3 H241 V46 H199 Z M210 12 H230 M206 22 H234 M216 22 Q215 36 206 40 M224 22 V36 Q224 40 228 40 H234 V34" fill="none" stroke="#ffffff" stroke-width="5"/></g><text x="46" y="40" font-family="Liberation Sans" font-size="13" fill="#ffffff" textLength="118" lengthAdjust="spacing">www.sd173.com</text></svg></body></html>
